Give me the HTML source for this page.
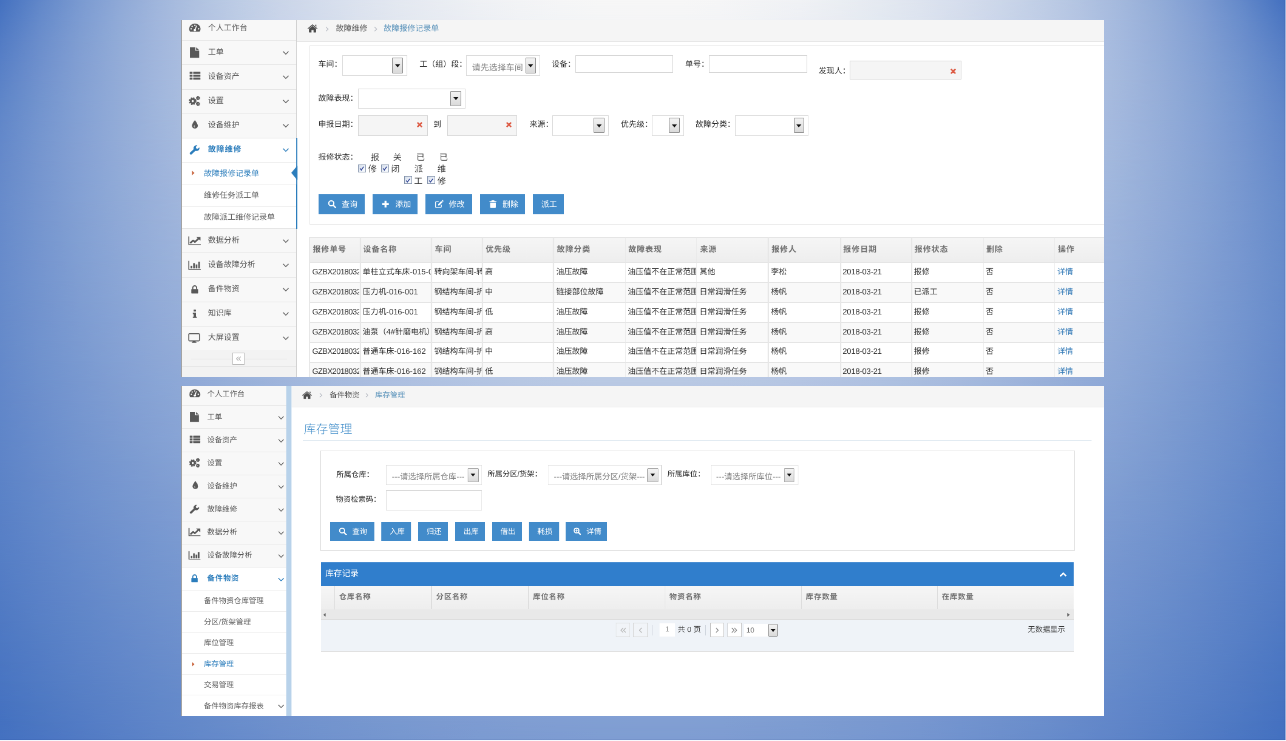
<!DOCTYPE html><html lang="zh-CN"><head><meta charset="utf-8"><title>故障报修记录单 / 库存管理</title><style>
html,body{margin:0;padding:0}
body{width:1286px;height:741px;overflow:hidden;position:relative;background:#4472c4;font-family:"Liberation Sans","Noto Sans CJK SC",sans-serif}
#bg{position:absolute;left:0;top:0;width:1286px;height:741px;overflow:hidden}
#bg i{position:absolute;left:0;width:1286px;display:block}
#bg .eb{top:740px;height:1px;background:rgba(255,255,255,.94)}
#bg .er{left:1285px;top:0;width:1px;height:741px;background:rgba(255,255,255,.45)}
#bg .db{top:739px;height:1px;background:rgba(20,40,120,.07)}
#bg .dr{left:1284px;top:0;width:1px;height:740px;background:rgba(20,40,120,.06)}
.edge{position:absolute;left:181px;width:1px;background:#a3a3a3}
.shot{position:absolute;overflow:hidden;background:#fff}
.pg{position:absolute;left:0;top:0;width:1700px;height:700px;transform-origin:0 0;font-size:13px;color:#393939;will-change:transform;text-rendering:geometricPrecision}
.pg>div,.pg>span,.pg>svg{position:absolute;box-sizing:border-box}
.ic{position:absolute;display:block;overflow:visible}
.t{position:absolute;white-space:nowrap;display:block}
.lab{color:#2c2c2c}
.ph{color:#858585}
.cb14{font-size:14px;color:#393939}
.h1{font-size:21px;color:#3f8cc9;font-weight:300}
.bc{background:#f5f5f5}
.panel{border:1px solid #e3e3e3;background:#fff}
.sel{border:1px solid #dadada;background:#fff}
.dd{border:1.25px solid #858585;background:linear-gradient(#f4f4f4,#dadada);border-radius:1px}
.inp{border:1px solid #d5d5d5;background:#fff}
.inp.ro{background:#f5f5f5}
.btn{background:#428bca;color:#fff;text-align:center;white-space:nowrap;display:flex;align-items:center;justify-content:center;padding-left:3px}
.btn span{line-height:20px;position:relative;top:.6px}
.btn .bi{display:block;color:#fff;flex:none}
.chk{border:1.3px solid #8493ab;background:linear-gradient(135deg,#d3dcea,#f6f9fd 75%)}
.thead{background:linear-gradient(#f6f6f6,#eee)}
.cell{overflow:hidden}
.cell .t{line-height:20px}
.th{color:#707070;font-weight:bold;letter-spacing:.9px}
.td{color:#2e2e2e}
.td.lk{color:#337ab7}
.n0{letter-spacing:-.55px}
.n8{letter-spacing:-.2px}
.sbg{background:#f2f2f2}
.it{background:#f8f8f8}
.it.act{background:#fff}
.lb{color:#585858}
.lb.act{color:#2b7dbc;font-weight:bold;letter-spacing:.9px}
.sit{background:#fff}
.slb{color:#616161}
.slb.sact{color:#2b7dbc}
.tb{border:1px solid #bbb;background:#fff}
.strip{background:#b8d2ea}
.gtitle{background:#307ecc}
.ghead{background:linear-gradient(#f6f6f6,#eee)}
.hsb{background:#e9e9e9}
.pager{background:#eff3f8}
.pgb{border:1px solid #c6c6c6;background:#fff}
.pgb.dis{background:#f1f4f8;border-color:#d4d4d4}
</style></head><body><div id="bg"><i style="top:0px;height:20px;background:linear-gradient(90deg,#4471c0 0px,#6187c9 40px,#7a9ad1 80px,#8fa9d7 120px,#a1b7dd 160px,#b1c3e1 200px,#becde6 240px,#cad5e9 280px,#d4ddec 320px,#dde3ef 360px,#e4e9f1 400px,#eaedf3 440px,#eff1f5 480px,#f3f4f6 520px,#f6f6f7 560px,#f7f7f7 600px,#f7f7f7 640px,#f7f7f7 680px,#f6f6f7 720px,#f3f4f6 760px,#f0f2f5 800px,#ebeef3 840px,#e5eaf1 880px,#dee4ef 920px,#d6deed 960px,#ccd7ea 1000px,#c0cee6 1040px,#b3c4e2 1080px,#a4b9dd 1120px,#92acd8 1160px,#7e9cd2 1200px,#658aca 1240px,#4773c1 1280px,#4471c0 1286px);"></i><i style="top:0px;height:40px;background:linear-gradient(90deg,#4b76c2 0px,#668bcb 40px,#7d9cd2 80px,#91abd8 120px,#a2b7dd 160px,#b1c2e1 200px,#bdcce5 240px,#c9d4e9 280px,#d2dbec 320px,#dbe2ee 360px,#e2e7f0 400px,#e7ebf2 440px,#eceff4 480px,#f0f2f5 520px,#f2f4f6 560px,#f4f5f6 600px,#f5f5f6 640px,#f4f5f6 680px,#f3f4f6 720px,#f0f2f5 760px,#edeff4 800px,#e8ecf2 840px,#e2e8f1 880px,#dce3ef 920px,#d4dcec 960px,#cad5e9 1000px,#bfcde6 1040px,#b3c4e2 1080px,#a4b9de 1120px,#94add8 1160px,#819ed3 1200px,#6a8ecc 1240px,#4f79c3 1280px,#4b76c2 1286px);-webkit-mask-image:linear-gradient(180deg,transparent 0,#000 50%);mask-image:linear-gradient(180deg,transparent 0,#000 50%);"></i><i style="top:20px;height:40px;background:linear-gradient(90deg,#527bc4 0px,#6b8ecc 40px,#809ed2 80px,#92acd8 120px,#a2b7dd 160px,#b0c2e1 200px,#bccbe5 240px,#c7d3e8 280px,#d0daeb 320px,#d8e0ee 360px,#dfe5f0 400px,#e5e9f1 440px,#e9edf3 480px,#edeff4 520px,#eff1f5 560px,#f1f2f5 600px,#f1f3f5 640px,#f1f2f5 680px,#eff1f5 720px,#edf0f4 760px,#eaedf3 800px,#e5eaf2 840px,#e0e6f0 880px,#d9e1ee 920px,#d1dbeb 960px,#c8d4e9 1000px,#becce5 1040px,#b2c3e2 1080px,#a4b9de 1120px,#95add9 1160px,#83a0d3 1200px,#6e90cd 1240px,#567ec5 1280px,#527bc4 1286px);-webkit-mask-image:linear-gradient(180deg,transparent 0,#000 50%);mask-image:linear-gradient(180deg,transparent 0,#000 50%);"></i><i style="top:40px;height:40px;background:linear-gradient(90deg,#577fc6 0px,#6e90cd 40px,#829fd3 80px,#93acd8 120px,#a2b7dd 160px,#afc1e1 200px,#bbcae5 240px,#c5d2e8 280px,#ced8ea 320px,#d6deed 360px,#dce3ef 400px,#e2e7f0 440px,#e6eaf2 480px,#eaedf3 520px,#eceff4 560px,#edf0f4 600px,#eef0f4 640px,#eef0f4 680px,#eceff4 720px,#eaedf3 760px,#e7ebf2 800px,#e2e8f1 840px,#dde4ef 880px,#d7dfed 920px,#cfd9eb 960px,#c7d3e8 1000px,#bdcbe5 1040px,#b1c3e2 1080px,#a4b9de 1120px,#95aed9 1160px,#84a1d4 1200px,#7193ce 1240px,#5b82c7 1280px,#577fc6 1286px);-webkit-mask-image:linear-gradient(180deg,transparent 0,#000 50%);mask-image:linear-gradient(180deg,transparent 0,#000 50%);"></i><i style="top:60px;height:40px;background:linear-gradient(90deg,#5b82c7 0px,#7192ce 40px,#83a0d3 80px,#93acd8 120px,#a2b7dd 160px,#aec1e1 200px,#bac9e4 240px,#c3d0e7 280px,#ccd7ea 320px,#d3dcec 360px,#dae1ee 400px,#dfe5f0 440px,#e3e8f1 480px,#e6ebf2 520px,#e9ecf3 560px,#eaedf3 600px,#ebeef3 640px,#eaedf3 680px,#e9edf3 720px,#e7ebf2 760px,#e4e9f1 800px,#e0e5f0 840px,#dae2ee 880px,#d4ddec 920px,#cdd8ea 960px,#c5d1e8 1000px,#bbcae5 1040px,#b0c2e1 1080px,#a4b9dd 1120px,#96aed9 1160px,#86a2d4 1200px,#7395cf 1240px,#5f85c8 1280px,#5b82c7 1286px);-webkit-mask-image:linear-gradient(180deg,transparent 0,#000 50%);mask-image:linear-gradient(180deg,transparent 0,#000 50%);"></i><i style="top:80px;height:40px;background:linear-gradient(90deg,#5e85c8 0px,#7294ce 40px,#84a1d4 80px,#93acd8 120px,#a1b7dd 160px,#adc0e0 200px,#b8c8e4 240px,#c1cfe7 280px,#cad5e9 320px,#d1daeb 360px,#d7dfed 400px,#dce3ef 440px,#e0e6f0 480px,#e3e8f1 520px,#e6eaf2 560px,#e7ebf2 600px,#e7ebf2 640px,#e7ebf2 680px,#e6eaf2 720px,#e4e8f1 760px,#e1e6f0 800px,#dde3ef 840px,#d8e0ed 880px,#d2dbec 920px,#cbd6e9 960px,#c3d0e7 1000px,#b9c9e4 1040px,#afc1e1 1080px,#a3b8dd 1120px,#96aed9 1160px,#86a3d4 1200px,#7596cf 1240px,#6287c9 1280px,#5e85c8 1286px);-webkit-mask-image:linear-gradient(180deg,transparent 0,#000 50%);mask-image:linear-gradient(180deg,transparent 0,#000 50%);"></i><i style="top:100px;height:40px;background:linear-gradient(90deg,#6187c9 0px,#7495cf 40px,#84a1d4 80px,#93acd8 120px,#a0b6dc 160px,#acbfe0 200px,#b6c6e3 240px,#bfcde6 280px,#c7d3e8 320px,#ced8ea 360px,#d4ddec 400px,#d9e1ee 440px,#dde4ef 480px,#e0e6f0 520px,#e2e7f1 560px,#e4e9f1 600px,#e4e9f1 640px,#e4e9f1 680px,#e3e8f1 720px,#e0e6f0 760px,#dde4ef 800px,#dae1ee 840px,#d5dded 880px,#cfd9eb 920px,#c8d4e9 960px,#c1cee6 1000px,#b8c8e4 1040px,#aec0e0 1080px,#a2b7dd 1120px,#95aed9 1160px,#87a3d5 1200px,#7697d0 1240px,#6489ca 1280px,#6187c9 1286px);-webkit-mask-image:linear-gradient(180deg,transparent 0,#000 50%);mask-image:linear-gradient(180deg,transparent 0,#000 50%);"></i><i style="top:120px;height:40px;background:linear-gradient(90deg,#6388ca 0px,#7596cf 40px,#85a1d4 80px,#93acd8 120px,#9fb5dc 160px,#aabedf 200px,#b4c5e3 240px,#bdcce5 280px,#c5d1e8 320px,#ccd6ea 360px,#d1dbeb 400px,#d6deed 440px,#dae1ee 480px,#dde3ef 520px,#dfe5f0 560px,#e0e6f0 600px,#e1e6f0 640px,#e0e6f0 680px,#dfe5f0 720px,#dde4ef 760px,#dae2ee 800px,#d7dfed 840px,#d2dbec 880px,#ccd7ea 920px,#c6d2e8 960px,#becde6 1000px,#b6c6e3 1040px,#acbfe0 1080px,#a1b7dd 1120px,#95add9 1160px,#87a3d5 1200px,#7797d0 1240px,#668aca 1280px,#6388ca 1286px);-webkit-mask-image:linear-gradient(180deg,transparent 0,#000 50%);mask-image:linear-gradient(180deg,transparent 0,#000 50%);"></i><i style="top:140px;height:40px;background:linear-gradient(90deg,#6589ca 0px,#7696cf 40px,#85a1d4 80px,#92abd8 120px,#9eb4dc 160px,#a9bddf 200px,#b2c4e2 240px,#bbcae5 280px,#c2d0e7 320px,#c9d4e9 360px,#ced9eb 400px,#d3dcec 440px,#d7dfed 480px,#dae1ee 520px,#dce3ef 560px,#dde4ef 600px,#dee4ef 640px,#dde4ef 680px,#dce3ef 720px,#dae1ee 760px,#d7dfed 800px,#d4ddec 840px,#cfd9eb 880px,#cad5e9 920px,#c3d0e7 960px,#bccbe5 1000px,#b4c5e2 1040px,#aabedf 1080px,#a0b6dc 1120px,#94add9 1160px,#87a3d4 1200px,#7898d0 1240px,#678bcb 1280px,#6589ca 1286px);-webkit-mask-image:linear-gradient(180deg,transparent 0,#000 50%);mask-image:linear-gradient(180deg,transparent 0,#000 50%);"></i><i style="top:160px;height:40px;background:linear-gradient(90deg,#668aca 0px,#7696cf 40px,#84a1d4 80px,#91abd8 120px,#9db3db 160px,#a7bbde 200px,#b0c2e1 240px,#b9c8e4 280px,#c0cee6 320px,#c6d2e8 360px,#ccd6ea 400px,#d0daeb 440px,#d4ddec 480px,#d7dfed 520px,#d9e0ee 560px,#dae1ee 600px,#dae2ee 640px,#dae1ee 680px,#d9e0ee 720px,#d7dfed 760px,#d4ddec 800px,#d1daeb 840px,#ccd7ea 880px,#c7d3e8 920px,#c1cee6 960px,#bac9e4 1000px,#b2c3e2 1040px,#a9bcdf 1080px,#9eb5dc 1120px,#93acd8 1160px,#86a3d4 1200px,#7898d0 1240px,#688ccb 1280px,#668aca 1286px);-webkit-mask-image:linear-gradient(180deg,transparent 0,#000 50%);mask-image:linear-gradient(180deg,transparent 0,#000 50%);"></i><i style="top:180px;height:40px;background:linear-gradient(90deg,#678bcb 0px,#7696cf 40px,#84a1d4 80px,#90aad7 120px,#9bb2db 160px,#a5bade 200px,#aec1e1 240px,#b6c7e3 280px,#bdcce5 320px,#c3d0e7 360px,#c9d4e9 400px,#cdd8ea 440px,#d1daeb 480px,#d3dcec 520px,#d5deed 560px,#d7dfed 600px,#d7dfed 640px,#d7dfed 680px,#d6deed 720px,#d4ddec 760px,#d1dbeb 800px,#ced8ea 840px,#c9d5e9 880px,#c4d1e7 920px,#becde6 960px,#b7c7e3 1000px,#b0c2e1 1040px,#a7bbde 1080px,#9db4db 1120px,#92abd8 1160px,#86a2d4 1200px,#7898d0 1240px,#698dcb 1280px,#678bcb 1286px);-webkit-mask-image:linear-gradient(180deg,transparent 0,#000 50%);mask-image:linear-gradient(180deg,transparent 0,#000 50%);"></i><i style="top:200px;height:40px;background:linear-gradient(90deg,#678bcb 0px,#7696cf 40px,#83a0d3 80px,#8fa9d7 120px,#9ab1da 160px,#a4b9dd 200px,#acbfe0 240px,#b4c5e2 280px,#bbcae4 320px,#c1cee6 360px,#c6d2e8 400px,#cad5e9 440px,#cdd8ea 480px,#d0daeb 520px,#d2dbec 560px,#d3dcec 600px,#d4ddec 640px,#d3dcec 680px,#d2dcec 720px,#d1daeb 760px,#ced8ea 800px,#cbd6e9 840px,#c6d3e8 880px,#c1cfe7 920px,#bccbe5 960px,#b5c6e3 1000px,#adc0e0 1040px,#a5bade 1080px,#9bb2db 1120px,#91aad8 1160px,#85a2d4 1200px,#7898d0 1240px,#698dcb 1280px,#678bcb 1286px);-webkit-mask-image:linear-gradient(180deg,transparent 0,#000 50%);mask-image:linear-gradient(180deg,transparent 0,#000 50%);"></i><i style="top:220px;height:40px;background:linear-gradient(90deg,#678bcb 0px,#7596cf 40px,#82a0d3 80px,#8ea8d7 120px,#98b0da 160px,#a2b7dd 200px,#aabddf 240px,#b2c3e2 280px,#b8c8e4 320px,#becce5 360px,#c3d0e7 400px,#c7d3e8 440px,#cad6e9 480px,#cdd8ea 520px,#cfd9eb 560px,#d0daeb 600px,#d0daeb 640px,#d0daeb 680px,#cfd9eb 720px,#cdd8ea 760px,#cbd6e9 800px,#c8d3e8 840px,#c4d0e7 880px,#bfcde6 920px,#b9c9e4 960px,#b3c4e2 1000px,#abbee0 1040px,#a3b8dd 1080px,#9ab1da 1120px,#8fa9d7 1160px,#84a1d4 1200px,#7797d0 1240px,#698dcb 1280px,#678bcb 1286px);-webkit-mask-image:linear-gradient(180deg,transparent 0,#000 50%);mask-image:linear-gradient(180deg,transparent 0,#000 50%);"></i><i style="top:240px;height:40px;background:linear-gradient(90deg,#678bcb 0px,#7595cf 40px,#819fd3 80px,#8ca7d6 120px,#96afd9 160px,#a0b6dc 200px,#a8bcdf 240px,#afc1e1 280px,#b5c6e3 320px,#bbcae5 360px,#c0cee6 400px,#c4d1e7 440px,#c7d3e8 480px,#cad5e9 520px,#ccd7ea 560px,#cdd7ea 600px,#cdd8ea 640px,#cdd7ea 680px,#ccd7ea 720px,#cad5e9 760px,#c8d4e8 800px,#c4d1e7 840px,#c1cee6 880px,#bccbe5 920px,#b6c7e3 960px,#b0c2e1 1000px,#a9bddf 1040px,#a1b7dd 1080px,#98b0da 1120px,#8ea8d7 1160px,#83a0d3 1200px,#7797d0 1240px,#698dcb 1280px,#678bcb 1286px);-webkit-mask-image:linear-gradient(180deg,transparent 0,#000 50%);mask-image:linear-gradient(180deg,transparent 0,#000 50%);"></i><i style="top:260px;height:40px;background:linear-gradient(90deg,#678bcb 0px,#7495cf 40px,#809ed2 80px,#8ba6d6 120px,#95add9 160px,#9db4db 200px,#a5bade 240px,#adbfe0 280px,#b3c4e2 320px,#b8c8e4 360px,#bdcce5 400px,#c1cee6 440px,#c4d1e7 480px,#c7d3e8 520px,#c8d4e9 560px,#c9d5e9 600px,#cad5e9 640px,#cad5e9 680px,#c9d4e9 720px,#c7d3e8 760px,#c5d1e7 800px,#c1cfe7 840px,#becce5 880px,#b9c9e4 920px,#b4c5e2 960px,#adc0e0 1000px,#a7bbde 1040px,#9fb5dc 1080px,#96aed9 1120px,#8ca7d6 1160px,#829fd3 1200px,#7696cf 1240px,#698dcb 1280px,#678bcb 1286px);-webkit-mask-image:linear-gradient(180deg,transparent 0,#000 50%);mask-image:linear-gradient(180deg,transparent 0,#000 50%);"></i><i style="top:280px;height:40px;background:linear-gradient(90deg,#668bcb 0px,#7394ce 40px,#7f9dd2 80px,#89a5d5 120px,#93acd8 160px,#9bb2db 200px,#a3b8dd 240px,#aabddf 280px,#b0c2e1 320px,#b5c6e3 360px,#bac9e4 400px,#becce5 440px,#c1cfe6 480px,#c3d0e7 520px,#c5d2e8 560px,#c6d2e8 600px,#c7d3e8 640px,#c6d3e8 680px,#c5d2e8 720px,#c4d1e7 760px,#c1cfe7 800px,#becde6 840px,#bbcae4 880px,#b6c6e3 920px,#b1c3e1 960px,#abbee0 1000px,#a4b9de 1040px,#9db3db 1080px,#94add9 1120px,#8ba6d6 1160px,#809ed3 1200px,#7596cf 1240px,#688ccb 1280px,#668bcb 1286px);-webkit-mask-image:linear-gradient(180deg,transparent 0,#000 50%);mask-image:linear-gradient(180deg,transparent 0,#000 50%);"></i><i style="top:300px;height:40px;background:linear-gradient(90deg,#668aca 0px,#7293ce 40px,#7d9cd2 80px,#87a3d5 120px,#91aad8 160px,#99b1da 200px,#a1b6dc 240px,#a7bbdf 280px,#adc0e0 320px,#b2c4e2 360px,#b7c7e3 400px,#bbcae4 440px,#becce5 480px,#c0cee6 520px,#c2cfe7 560px,#c3d0e7 600px,#c3d0e7 640px,#c3d0e7 680px,#c2cfe7 720px,#c0cee6 760px,#becce6 800px,#bbcae5 840px,#b8c8e4 880px,#b3c4e2 920px,#aec0e1 960px,#a8bcdf 1000px,#a2b7dd 1040px,#9ab2db 1080px,#92abd8 1120px,#89a5d5 1160px,#7f9dd2 1200px,#7495cf 1240px,#688ccb 1280px,#668aca 1286px);-webkit-mask-image:linear-gradient(180deg,transparent 0,#000 50%);mask-image:linear-gradient(180deg,transparent 0,#000 50%);"></i><i style="top:320px;height:40px;background:linear-gradient(90deg,#658aca 0px,#7193ce 40px,#7c9bd1 80px,#86a2d4 120px,#8fa9d7 160px,#97afd9 200px,#9eb4dc 240px,#a5b9de 280px,#abbee0 320px,#b0c2e1 360px,#b4c5e2 400px,#b8c8e4 440px,#bbcae4 480px,#bdcce5 520px,#bfcde6 560px,#c0cee6 600px,#c0cee6 640px,#c0cee6 680px,#bfcde6 720px,#bdcce5 760px,#bbcae5 800px,#b8c8e4 840px,#b5c5e3 880px,#b0c2e1 920px,#abbee0 960px,#a6bade 1000px,#9fb5dc 1040px,#98b0da 1080px,#90aad7 1120px,#87a3d5 1160px,#7d9cd2 1200px,#7394ce 1240px,#678bcb 1280px,#658aca 1286px);-webkit-mask-image:linear-gradient(180deg,transparent 0,#000 50%);mask-image:linear-gradient(180deg,transparent 0,#000 50%);"></i><i style="top:340px;height:40px;background:linear-gradient(90deg,#6489ca 0px,#7092cd 40px,#7a9ad1 80px,#84a1d4 120px,#8da7d6 160px,#95add9 200px,#9cb3db 240px,#a2b7dd 280px,#a8bcdf 320px,#adbfe0 360px,#b1c3e1 400px,#b5c5e3 440px,#b7c7e3 480px,#bac9e4 520px,#bbcae5 560px,#bccbe5 600px,#bdcbe5 640px,#bccbe5 680px,#bccbe5 720px,#bac9e4 760px,#b8c8e4 800px,#b5c6e3 840px,#b2c3e2 880px,#adc0e0 920px,#a9bcdf 960px,#a3b8dd 1000px,#9db3db 1040px,#96aed9 1080px,#8ea8d7 1120px,#85a2d4 1160px,#7c9bd1 1200px,#7193ce 1240px,#668aca 1280px,#6489ca 1286px);-webkit-mask-image:linear-gradient(180deg,transparent 0,#000 50%);mask-image:linear-gradient(180deg,transparent 0,#000 50%);"></i><i style="top:360px;height:40px;background:linear-gradient(90deg,#6388ca 0px,#6e91cd 40px,#7898d0 80px,#829fd3 120px,#8aa6d6 160px,#92abd8 200px,#99b1da 240px,#9fb5dc 280px,#a5bade 320px,#aabddf 360px,#aec0e1 400px,#b1c3e2 440px,#b4c5e3 480px,#b7c7e3 520px,#b8c8e4 560px,#b9c9e4 600px,#b9c9e4 640px,#b9c9e4 680px,#b8c8e4 720px,#b7c7e3 760px,#b5c5e3 800px,#b2c3e2 840px,#aec1e1 880px,#aabedf 920px,#a6bade 960px,#a0b6dc 1000px,#9ab1da 1040px,#93acd8 1080px,#8ca7d6 1120px,#83a0d3 1160px,#7a99d1 1200px,#7092cd 1240px,#6589ca 1280px,#6388ca 1286px);-webkit-mask-image:linear-gradient(180deg,transparent 0,#000 50%);mask-image:linear-gradient(180deg,transparent 0,#000 50%);"></i><i style="top:380px;height:40px;background:linear-gradient(90deg,#6287c9 0px,#6d8fcc 40px,#7797d0 80px,#809ed2 120px,#88a4d5 160px,#90aad7 200px,#97afd9 240px,#9db3db 280px,#a2b7dd 320px,#a7bbde 360px,#abbee0 400px,#aec1e1 440px,#b1c3e2 480px,#b3c4e2 520px,#b5c6e3 560px,#b6c6e3 600px,#b6c6e3 640px,#b6c6e3 680px,#b5c6e3 720px,#b4c5e2 760px,#b2c3e2 800px,#afc1e1 840px,#abbee0 880px,#a7bbdf 920px,#a3b8dd 960px,#9eb4dc 1000px,#98b0da 1040px,#91aad8 1080px,#89a5d5 1120px,#819fd3 1160px,#7898d0 1200px,#6e91cd 1240px,#6389ca 1280px,#6287c9 1286px);-webkit-mask-image:linear-gradient(180deg,transparent 0,#000 50%);mask-image:linear-gradient(180deg,transparent 0,#000 50%);"></i><i style="top:400px;height:40px;background:linear-gradient(90deg,#6086c9 0px,#6b8ecc 40px,#7596cf 80px,#7e9cd2 120px,#86a2d4 160px,#8da8d7 200px,#94add9 240px,#9ab1da 280px,#9fb5dc 320px,#a4b9dd 360px,#a8bcdf 400px,#abbee0 440px,#aec0e1 480px,#b0c2e1 520px,#b2c3e2 560px,#b3c4e2 600px,#b3c4e2 640px,#b3c4e2 680px,#b2c3e2 720px,#b0c2e1 760px,#aec1e1 800px,#acbfe0 840px,#a8bcdf 880px,#a4b9de 920px,#a0b6dc 960px,#9bb2db 1000px,#95aed9 1040px,#8ea9d7 1080px,#87a3d5 1120px,#7f9dd2 1160px,#7697cf 1200px,#6d8fcc 1240px,#6288c9 1280px,#6086c9 1286px);-webkit-mask-image:linear-gradient(180deg,transparent 0,#000 50%);mask-image:linear-gradient(180deg,transparent 0,#000 50%);"></i><i style="top:420px;height:40px;background:linear-gradient(90deg,#5f85c8 0px,#698dcc 40px,#7394ce 80px,#7c9bd1 120px,#84a1d4 160px,#8ba6d6 200px,#91abd8 240px,#97afda 280px,#9cb3db 320px,#a1b7dd 360px,#a5b9de 400px,#a8bcdf 440px,#abbee0 480px,#adc0e0 520px,#aec1e1 560px,#afc1e1 600px,#b0c2e1 640px,#afc1e1 680px,#afc1e1 720px,#adc0e0 760px,#abbee0 800px,#a9bcdf 840px,#a5bade 880px,#a2b7dd 920px,#9db4db 960px,#98b0da 1000px,#92acd8 1040px,#8ca7d6 1080px,#85a1d4 1120px,#7d9cd1 1160px,#7495cf 1200px,#6b8ecc 1240px,#6186c9 1280px,#5f85c8 1286px);-webkit-mask-image:linear-gradient(180deg,transparent 0,#000 50%);mask-image:linear-gradient(180deg,transparent 0,#000 50%);"></i><i style="top:440px;height:40px;background:linear-gradient(90deg,#5e84c8 0px,#688ccb 40px,#7193ce 80px,#7999d0 120px,#819fd3 160px,#88a4d5 200px,#8fa9d7 240px,#94add9 280px,#99b1da 320px,#9eb4dc 360px,#a2b7dd 400px,#a5bade 440px,#a8bcdf 480px,#aabddf 520px,#abbee0 560px,#acbfe0 600px,#acbfe0 640px,#acbfe0 680px,#abbee0 720px,#aabddf 760px,#a8bcdf 800px,#a5bade 840px,#a2b8dd 880px,#9fb5dc 920px,#9ab1da 960px,#95aed9 1000px,#90aad7 1040px,#89a5d5 1080px,#82a0d3 1120px,#7b9ad1 1160px,#7294ce 1200px,#698dcb 1240px,#5f85c8 1280px,#5e84c8 1286px);-webkit-mask-image:linear-gradient(180deg,transparent 0,#000 50%);mask-image:linear-gradient(180deg,transparent 0,#000 50%);"></i><i style="top:460px;height:40px;background:linear-gradient(90deg,#5c83c7 0px,#668aca 40px,#6f91cd 80px,#7797d0 120px,#7f9dd2 160px,#86a2d4 200px,#8ca7d6 240px,#92abd8 280px,#97afd9 320px,#9bb2db 360px,#9fb5dc 400px,#a2b7dd 440px,#a4b9de 480px,#a6bbde 520px,#a8bcdf 560px,#a9bcdf 600px,#a9bddf 640px,#a9bcdf 680px,#a8bcdf 720px,#a7bbde 760px,#a5b9de 800px,#a2b8dd 840px,#9fb5dc 880px,#9bb2db 920px,#97afda 960px,#92acd8 1000px,#8da8d6 1040px,#87a3d4 1080px,#809ed2 1120px,#7898d0 1160px,#7092ce 1200px,#678bcb 1240px,#5e84c8 1280px,#5c83c7 1286px);-webkit-mask-image:linear-gradient(180deg,transparent 0,#000 50%);mask-image:linear-gradient(180deg,transparent 0,#000 50%);"></i><i style="top:480px;height:40px;background:linear-gradient(90deg,#5a82c7 0px,#6489ca 40px,#6d90cd 80px,#7596cf 120px,#7c9bd1 160px,#83a0d3 200px,#89a5d5 240px,#8fa9d7 280px,#94add8 320px,#98b0da 360px,#9cb3db 400px,#9fb5dc 440px,#a1b7dd 480px,#a3b8dd 520px,#a5b9de 560px,#a5bade 600px,#a6bade 640px,#a6bade 680px,#a5b9de 720px,#a3b8dd 760px,#a2b7dd 800px,#9fb5dc 840px,#9cb3db 880px,#98b0da 920px,#94add9 960px,#90aad7 1000px,#8aa5d6 1040px,#84a1d4 1080px,#7d9cd2 1120px,#7697cf 1160px,#6e91cd 1200px,#658aca 1240px,#5c83c7 1280px,#5a82c7 1286px);-webkit-mask-image:linear-gradient(180deg,transparent 0,#000 50%);mask-image:linear-gradient(180deg,transparent 0,#000 50%);"></i><i style="top:500px;height:40px;background:linear-gradient(90deg,#5980c6 0px,#6288c9 40px,#6b8ecc 80px,#7394ce 120px,#7a99d1 160px,#819ed3 200px,#87a3d4 240px,#8ca7d6 280px,#91aad8 320px,#95aed9 360px,#98b0da 400px,#9cb3db 440px,#9eb4dc 480px,#a0b6dc 520px,#a1b7dd 560px,#a2b8dd 600px,#a3b8dd 640px,#a2b8dd 680px,#a2b7dd 720px,#a0b6dc 760px,#9eb5dc 800px,#9cb3db 840px,#99b1da 880px,#95aed9 920px,#91abd8 960px,#8da7d6 1000px,#87a3d5 1040px,#819fd3 1080px,#7b9ad1 1120px,#7495cf 1160px,#6c8fcc 1200px,#6389ca 1240px,#5a82c7 1280px,#5980c6 1286px);-webkit-mask-image:linear-gradient(180deg,transparent 0,#000 50%);mask-image:linear-gradient(180deg,transparent 0,#000 50%);"></i><i style="top:520px;height:40px;background:linear-gradient(90deg,#577fc6 0px,#6086c9 40px,#698ccb 80px,#7092ce 120px,#7798d0 160px,#7e9cd2 200px,#84a1d4 240px,#89a5d5 280px,#8ea8d7 320px,#92abd8 360px,#95aed9 400px,#98b0da 440px,#9bb2db 480px,#9db3db 520px,#9eb4dc 560px,#9fb5dc 600px,#9fb5dc 640px,#9fb5dc 680px,#9eb5dc 720px,#9db4db 760px,#9bb2db 800px,#99b0da 840px,#96aed9 880px,#92acd8 920px,#8ea9d7 960px,#8aa5d5 1000px,#85a1d4 1040px,#7f9dd2 1080px,#7898d0 1120px,#7193ce 1160px,#6a8dcc 1200px,#6187c9 1240px,#5880c6 1280px,#577fc6 1286px);-webkit-mask-image:linear-gradient(180deg,transparent 0,#000 50%);mask-image:linear-gradient(180deg,transparent 0,#000 50%);"></i><i style="top:540px;height:40px;background:linear-gradient(90deg,#557ec5 0px,#5e84c8 40px,#668bcb 80px,#6e90cd 120px,#7596cf 160px,#7b9ad1 200px,#819fd3 240px,#86a3d4 280px,#8ba6d6 320px,#8fa9d7 360px,#92acd8 400px,#95aed9 440px,#98b0da 480px,#99b1da 520px,#9bb2db 560px,#9cb3db 600px,#9cb3db 640px,#9cb3db 680px,#9bb2db 720px,#9ab1da 760px,#98b0da 800px,#96aed9 840px,#93acd8 880px,#8fa9d7 920px,#8ba6d6 960px,#87a3d5 1000px,#829fd3 1040px,#7c9bd1 1080px,#7696cf 1120px,#6f91cd 1160px,#688ccb 1200px,#5f85c8 1240px,#567fc6 1280px,#557ec5 1286px);-webkit-mask-image:linear-gradient(180deg,transparent 0,#000 50%);mask-image:linear-gradient(180deg,transparent 0,#000 50%);"></i><i style="top:560px;height:40px;background:linear-gradient(90deg,#537cc5 0px,#5c83c7 40px,#6489ca 80px,#6c8fcc 120px,#7294ce 160px,#7998d0 200px,#7e9dd2 240px,#83a0d3 280px,#88a4d5 320px,#8ca7d6 360px,#8fa9d7 400px,#92abd8 440px,#94add9 480px,#96afd9 520px,#98b0da 560px,#98b0da 600px,#99b0da 640px,#98b0da 680px,#98b0da 720px,#96afd9 760px,#95add9 800px,#92acd8 840px,#90aad7 880px,#8ca7d6 920px,#88a4d5 960px,#84a1d4 1000px,#7f9dd2 1040px,#7999d0 1080px,#7394cf 1120px,#6d8fcc 1160px,#658aca 1200px,#5d84c8 1240px,#557dc5 1280px,#537cc5 1286px);-webkit-mask-image:linear-gradient(180deg,transparent 0,#000 50%);mask-image:linear-gradient(180deg,transparent 0,#000 50%);"></i><i style="top:580px;height:40px;background:linear-gradient(90deg,#517bc4 0px,#5a81c7 40px,#6287c9 80px,#698dcb 120px,#7092cd 160px,#7696cf 200px,#7b9ad1 240px,#809ed3 280px,#85a2d4 320px,#89a4d5 360px,#8ca7d6 400px,#8fa9d7 440px,#91abd8 480px,#93acd8 520px,#94add9 560px,#95aed9 600px,#95aed9 640px,#95aed9 680px,#94add9 720px,#93acd8 760px,#92abd8 800px,#8fa9d7 840px,#8da7d6 880px,#89a5d5 920px,#85a2d4 960px,#819fd3 1000px,#7c9bd1 1040px,#7797d0 1080px,#7192ce 1120px,#6a8ecc 1160px,#6388c9 1200px,#5b82c7 1240px,#537cc4 1280px,#517bc4 1286px);-webkit-mask-image:linear-gradient(180deg,transparent 0,#000 50%);mask-image:linear-gradient(180deg,transparent 0,#000 50%);"></i><i style="top:600px;height:40px;background:linear-gradient(90deg,#4f79c3 0px,#5880c6 40px,#5f86c8 80px,#678bcb 120px,#6d90cd 160px,#7394ce 200px,#7998d0 240px,#7d9cd2 280px,#829fd3 320px,#86a2d4 360px,#89a5d5 400px,#8ca7d6 440px,#8ea8d7 480px,#90aad7 520px,#91abd8 560px,#92abd8 600px,#92abd8 640px,#92abd8 680px,#91abd8 720px,#90aad7 760px,#8ea9d7 800px,#8ca7d6 840px,#89a5d5 880px,#86a3d4 920px,#82a0d3 960px,#7e9dd2 1000px,#7999d0 1040px,#7495cf 1080px,#6e91cd 1120px,#688ccb 1160px,#6186c9 1200px,#5981c6 1240px,#517ac4 1280px,#4f79c3 1286px);-webkit-mask-image:linear-gradient(180deg,transparent 0,#000 50%);mask-image:linear-gradient(180deg,transparent 0,#000 50%);"></i><i style="top:620px;height:40px;background:linear-gradient(90deg,#4d78c3 0px,#557ec5 40px,#5d84c8 80px,#6489ca 120px,#6b8ecc 160px,#7092ce 200px,#7696cf 240px,#7b9ad1 280px,#7f9dd2 320px,#83a0d3 360px,#86a2d4 400px,#89a4d5 440px,#8ba6d6 480px,#8da7d6 520px,#8ea8d7 560px,#8fa9d7 600px,#8fa9d7 640px,#8fa9d7 680px,#8ea8d7 720px,#8da7d6 760px,#8ba6d6 800px,#89a5d5 840px,#86a3d4 880px,#83a0d3 920px,#7f9dd2 960px,#7b9ad1 1000px,#7697d0 1040px,#7193ce 1080px,#6b8fcc 1120px,#658aca 1160px,#5e85c8 1200px,#577fc6 1240px,#4e79c3 1280px,#4d78c3 1286px);-webkit-mask-image:linear-gradient(180deg,transparent 0,#000 50%);mask-image:linear-gradient(180deg,transparent 0,#000 50%);"></i><i style="top:640px;height:40px;background:linear-gradient(90deg,#4b76c2 0px,#537cc5 40px,#5b82c7 80px,#6287c9 120px,#688ccb 160px,#6e90cd 200px,#7394ce 240px,#7898d0 280px,#7c9bd1 320px,#7f9ed2 360px,#83a0d3 400px,#85a2d4 440px,#88a4d5 480px,#89a5d5 520px,#8ba6d6 560px,#8ba6d6 600px,#8ca7d6 640px,#8ba6d6 680px,#8ba6d6 720px,#89a5d5 760px,#88a4d5 800px,#86a2d4 840px,#83a0d3 880px,#809ed2 920px,#7c9bd1 960px,#7898d0 1000px,#7495cf 1040px,#6e91cd 1080px,#698dcb 1120px,#6388c9 1160px,#5c83c7 1200px,#547dc5 1240px,#4c77c3 1280px,#4b76c2 1286px);-webkit-mask-image:linear-gradient(180deg,transparent 0,#000 50%);mask-image:linear-gradient(180deg,transparent 0,#000 50%);"></i><i style="top:660px;height:40px;background:linear-gradient(90deg,#4975c2 0px,#517bc4 40px,#5880c6 80px,#5f85c8 120px,#658aca 160px,#6b8ecc 200px,#7092ce 240px,#7595cf 280px,#7999d0 320px,#7c9bd1 360px,#809ed2 400px,#82a0d3 440px,#84a1d4 480px,#86a2d4 520px,#87a3d5 560px,#88a4d5 600px,#88a4d5 640px,#88a4d5 680px,#87a3d5 720px,#86a3d4 760px,#85a1d4 800px,#83a0d3 840px,#809ed2 880px,#7d9cd1 920px,#7999d0 960px,#7596cf 1000px,#7192ce 1040px,#6c8fcc 1080px,#668bca 1120px,#6086c9 1160px,#5981c7 1200px,#527bc4 1240px,#4a76c2 1280px,#4975c2 1286px);-webkit-mask-image:linear-gradient(180deg,transparent 0,#000 50%);mask-image:linear-gradient(180deg,transparent 0,#000 50%);"></i><i style="top:680px;height:40px;background:linear-gradient(90deg,#4773c1 0px,#4e79c3 40px,#567ec5 80px,#5c83c7 120px,#6288c9 160px,#688ccb 200px,#6d90cd 240px,#7293ce 280px,#7696cf 320px,#7999d0 360px,#7c9bd1 400px,#7f9dd2 440px,#819fd3 480px,#83a0d3 520px,#84a1d4 560px,#85a1d4 600px,#85a2d4 640px,#85a1d4 680px,#84a1d4 720px,#83a0d3 760px,#819fd3 800px,#7f9dd2 840px,#7d9cd1 880px,#7a99d1 920px,#7697cf 960px,#7294ce 1000px,#6e90cd 1040px,#698dcb 1080px,#6388ca 1120px,#5d84c8 1160px,#577fc6 1200px,#507ac4 1240px,#4874c1 1280px,#4773c1 1286px);-webkit-mask-image:linear-gradient(180deg,transparent 0,#000 50%);mask-image:linear-gradient(180deg,transparent 0,#000 50%);"></i><i style="top:700px;height:40px;background:linear-gradient(90deg,#4471c0 0px,#4c77c2 40px,#537cc5 80px,#5a81c7 120px,#6086c9 160px,#658aca 200px,#6a8ecc 240px,#6f91cd 280px,#7394ce 320px,#7697cf 360px,#7999d0 400px,#7c9bd1 440px,#7e9cd2 480px,#809ed2 520px,#819ed3 560px,#819fd3 600px,#829fd3 640px,#829fd3 680px,#819fd3 720px,#809ed2 760px,#7e9dd2 800px,#7c9bd1 840px,#7a99d0 880px,#7797d0 920px,#7394cf 960px,#6f91cd 1000px,#6b8ecc 1040px,#668aca 1080px,#6186c9 1120px,#5b82c7 1160px,#547dc5 1200px,#4d78c3 1240px,#4672c1 1280px,#4471c0 1286px);-webkit-mask-image:linear-gradient(180deg,transparent 0,#000 50%);mask-image:linear-gradient(180deg,transparent 0,#000 50%);"></i><i style="top:720px;height:21px;background:linear-gradient(90deg,#4471c0 0px,#4a75c2 40px,#517ac4 80px,#577fc6 120px,#5d84c8 160px,#6288c9 200px,#678bcb 240px,#6c8fcc 280px,#7092cd 320px,#7394ce 360px,#7697cf 400px,#7998d0 440px,#7b9ad1 480px,#7c9bd1 520px,#7d9cd2 560px,#7e9dd2 600px,#7e9dd2 640px,#7e9dd2 680px,#7e9cd2 720px,#7c9bd1 760px,#7b9ad1 800px,#7999d0 840px,#7797d0 880px,#7495cf 920px,#7092ce 960px,#6c8fcc 1000px,#688ccb 1040px,#6388ca 1080px,#5e84c8 1120px,#5880c6 1160px,#527bc4 1200px,#4b76c2 1240px,#4471c0 1280px,#4471c0 1286px);-webkit-mask-image:linear-gradient(180deg,transparent 0,#000 95.24%);mask-image:linear-gradient(180deg,transparent 0,#000 95.24%);"></i><i style="top:740px;height:1px;background:linear-gradient(90deg,#4471c0 0px,#4a75c2 40px,#517ac4 80px,#577fc6 120px,#5d84c8 160px,#6288c9 200px,#678bcb 240px,#6c8fcc 280px,#7092cd 320px,#7394ce 360px,#7696cf 400px,#7898d0 440px,#7b9ad1 480px,#7c9bd1 520px,#7d9cd2 560px,#7e9cd2 600px,#7e9dd2 640px,#7e9cd2 680px,#7d9cd2 720px,#7c9bd1 760px,#7b9ad1 800px,#7999d0 840px,#7697cf 880px,#7395cf 920px,#7092ce 960px,#6c8fcc 1000px,#688ccb 1040px,#6388ca 1080px,#5e84c8 1120px,#5880c6 1160px,#527bc4 1200px,#4b76c2 1240px,#4471c0 1280px,#4471c0 1286px);-webkit-mask-image:linear-gradient(180deg,transparent 0,#000 100%);mask-image:linear-gradient(180deg,transparent 0,#000 100%);"></i><i class="db"></i><i class="dr"></i><i class="er"></i><i class="eb"></i></div><div class="edge" style="top:20px;height:357px"></div><div class="edge" style="top:386px;height:330px"></div><div class="shot" style="left:182px;top:20px;width:922px;height:357px;"><div class="pg" style="transform:scale(0.607)"><div class="bc" style="left:189.46px;top:-1.65px;width:1331.14px;height:36.90px;"></div><div style="left:189.46px;top:35.25px;width:1331.14px;height:1.00px;background:#e5e5e5;"></div><svg class="ic" style="left:205.99px;top:5.67px;width:18px;height:16px;color:#4c4c4c;" viewBox="0 0 18 16"><path fill="currentColor" d="M9 3.700l5.900 4.900v5.300c0 .3-.2.500-.5.500h-3.700v-4H7.300v4H3.600c-.3 0-.5-.2-.5-.5V8.600z"/><path fill="currentColor" d="M9 1l8.300 6.900-.9 1.100L9 2.900 1.600 9 .7 7.900z M13.300 1.800h2v3.200l-2-1.700z"/></svg><svg class="ic" style="left:234.37px;top:9.50px;width:10px;height:10px;color:#b2b6bf;" viewBox="0 0 12 12"><path fill="none" stroke="currentColor" stroke-width="1.300" d="M4 2l4 4-4 4"/></svg><span class="t" style="left:253.44px;top:3.84px;line-height:20px;color:#555;">故障维修</span><svg class="ic" style="left:313.62px;top:9.50px;width:10px;height:10px;color:#b2b6bf;" viewBox="0 0 12 12"><path fill="none" stroke="currentColor" stroke-width="1.300" d="M4 2l4 4-4 4"/></svg><span class="t" style="left:332.35px;top:3.84px;line-height:20px;color:#5791ba;">故障报修记录单</span><div class="panel" style="left:209.55px;top:41.84px;width:1319.78px;height:295.23px;"></div><span class="t lab" style="left:224.61px;top:63.15px;line-height:20px;">车间：</span><div class="sel" style="left:263.92px;top:57.82px;width:106.60px;height:34.28px;"></div><div class="dd" style="left:345.83px;top:62.47px;width:17.89px;height:25.14px;"></div><svg class="ic" style="left:350.58px;top:72.74px;width:8.400px;height:5px" viewBox="0 0 8.400 5"><path fill="#111" d="M0 0h8.400L4.200 5z"/></svg><span class="t lab" style="left:391.33px;top:63.15px;line-height:20px;">工（组）段：</span><div class="sel" style="left:468.36px;top:57.82px;width:121.92px;height:34.28px;"></div><span class="t ph" style="left:477.82px;top:68.09px;line-height:20px;font-size:14px;">请先选择车间</span><div class="dd" style="left:565.60px;top:62.47px;width:17.89px;height:25.14px;"></div><svg class="ic" style="left:570.35px;top:72.74px;width:8.400px;height:5px" viewBox="0 0 8.400 5"><path fill="#111" d="M0 0h8.400L4.200 5z"/></svg><span class="t lab" style="left:608.96px;top:63.15px;line-height:20px;">设备：</span><div class="inp" style="left:647.77px;top:57.82px;width:161.63px;height:29.17px;"></div><span class="t lab" style="left:829.05px;top:63.15px;line-height:20px;">单号：</span><div class="inp" style="left:867.87px;top:57.82px;width:162.12px;height:29.17px;"></div><span class="t lab" style="left:1048.82px;top:73.53px;line-height:20px;">发现人：</span><div class="inp ro" style="left:1100.32px;top:67.37px;width:183.21px;height:30.16px;"></div><svg class="ic" style="left:1264.68px;top:78.52px;width:11px;height:11px;color:#dd5a43;" viewBox="0 0 12 12"><path fill="none" stroke="currentColor" stroke-width="2.800" d="M2 2l8 8M10 2l-8 8"/></svg><span class="t lab" style="left:224.61px;top:119.24px;line-height:20px;">故障表现：</span><div class="sel" style="left:289.78px;top:112.51px;width:176.78px;height:33.95px;"></div><div class="dd" style="left:441.88px;top:117.17px;width:17.89px;height:24.81px;"></div><svg class="ic" style="left:446.62px;top:127.27px;width:8.400px;height:5px" viewBox="0 0 8.400 5"><path fill="#111" d="M0 0h8.400L4.200 5z"/></svg><span class="t lab" style="left:224.61px;top:161.83px;line-height:20px;">申报日期：</span><div class="inp ro" style="left:289.78px;top:156.67px;width:115.33px;height:34.28px;"></div><svg class="ic" style="left:386.43px;top:167.32px;width:11px;height:11px;color:#dd5a43;" viewBox="0 0 12 12"><path fill="none" stroke="currentColor" stroke-width="2.800" d="M2 2l8 8M10 2l-8 8"/></svg><span class="t lab" style="left:413.90px;top:161.83px;line-height:20px;">到</span><div class="inp ro" style="left:436.73px;top:156.67px;width:115.33px;height:34.28px;"></div><svg class="ic" style="left:533.21px;top:167.32px;width:11px;height:11px;color:#dd5a43;" viewBox="0 0 12 12"><path fill="none" stroke="currentColor" stroke-width="2.800" d="M2 2l8 8M10 2l-8 8"/></svg><span class="t lab" style="left:572.38px;top:161.83px;line-height:20px;">来源：</span><div class="sel" style="left:609.88px;top:156.67px;width:93.26px;height:34.28px;"></div><div class="dd" style="left:678.45px;top:161.32px;width:17.89px;height:25.14px;"></div><svg class="ic" style="left:683.20px;top:171.59px;width:8.400px;height:5px" viewBox="0 0 8.400 5"><path fill="#111" d="M0 0h8.400L4.200 5z"/></svg><span class="t lab" style="left:722.96px;top:161.83px;line-height:20px;">优先级：</span><div class="sel" style="left:774.46px;top:156.67px;width:52.40px;height:34.28px;"></div><div class="dd" style="left:802.18px;top:161.32px;width:17.89px;height:25.14px;"></div><svg class="ic" style="left:806.92px;top:171.59px;width:8.400px;height:5px" viewBox="0 0 8.400 5"><path fill="#111" d="M0 0h8.400L4.200 5z"/></svg><span class="t lab" style="left:846.02px;top:161.83px;line-height:20px;">故障分类：</span><div class="sel" style="left:911.03px;top:156.67px;width:121.26px;height:34.28px;"></div><div class="dd" style="left:1007.61px;top:161.32px;width:17.89px;height:25.14px;"></div><svg class="ic" style="left:1012.36px;top:171.59px;width:8.400px;height:5px" viewBox="0 0 8.400 5"><path fill="#111" d="M0 0h8.400L4.200 5z"/></svg><span class="t lab" style="left:224.61px;top:216.19px;line-height:20px;">报修状态：</span><span class="t cb14" style="left:309.96px;width:16px;text-align:center;top:215.54px;line-height:20px;">报</span><span class="t cb14" style="left:346.86px;width:16px;text-align:center;top:215.54px;line-height:20px;">关</span><span class="t cb14" style="left:385.08px;width:16px;text-align:center;top:215.54px;line-height:20px;">已</span><span class="t cb14" style="left:422.97px;width:16px;text-align:center;top:215.54px;line-height:20px;">已</span><span class="t cb14" style="left:305.67px;width:16px;text-align:center;top:235.30px;line-height:20px;">修</span><span class="t cb14" style="left:343.57px;width:16px;text-align:center;top:235.30px;line-height:20px;">闭</span><span class="t cb14" style="left:381.79px;width:16px;text-align:center;top:235.30px;line-height:20px;">派</span><span class="t cb14" style="left:419.68px;width:16px;text-align:center;top:235.30px;line-height:20px;">维</span><span class="t cb14" style="left:381.13px;width:16px;text-align:center;top:255.07px;line-height:20px;">工</span><span class="t cb14" style="left:419.68px;width:16px;text-align:center;top:255.07px;line-height:20px;">修</span><div class="chk" style="left:289.88px;top:237.65px;width:13.00px;height:13.00px;"></div><svg class="ic" style="left:291.13px;top:238.90px;width:10.5px;height:10.5px;color:#2b3f92;" viewBox="0 0 12 12"><path fill="none" stroke="currentColor" stroke-width="1.800" d="M2.500 6.300l2.500 2.700 4.500-6"/></svg><div class="chk" style="left:327.77px;top:237.65px;width:13.00px;height:13.00px;"></div><svg class="ic" style="left:329.02px;top:238.90px;width:10.5px;height:10.5px;color:#2b3f92;" viewBox="0 0 12 12"><path fill="none" stroke="currentColor" stroke-width="1.800" d="M2.500 6.300l2.500 2.700 4.500-6"/></svg><div class="chk" style="left:365.66px;top:257.26px;width:13.00px;height:13.00px;"></div><svg class="ic" style="left:366.91px;top:258.51px;width:10.5px;height:10.5px;color:#2b3f92;" viewBox="0 0 12 12"><path fill="none" stroke="currentColor" stroke-width="1.800" d="M2.500 6.300l2.500 2.700 4.500-6"/></svg><div class="chk" style="left:403.88px;top:257.26px;width:13.00px;height:13.00px;"></div><svg class="ic" style="left:405.13px;top:258.51px;width:10.5px;height:10.5px;color:#2b3f92;" viewBox="0 0 12 12"><path fill="none" stroke="currentColor" stroke-width="1.800" d="M2.500 6.300l2.500 2.700 4.500-6"/></svg><div class="btn" style="left:224.88px;top:286.99px;width:76.44px;height:33.28px;"><svg class="bi" style="width:14.5px;height:14.5px;margin-right:8.5px" viewBox="0 0 16 16"><circle cx="6.500" cy="6.500" r="4.600" fill="none" stroke="currentColor" stroke-width="2.200"/><path stroke="currentColor" stroke-width="2.600" stroke-linecap="round" d="M10.300 10.300l4 4"/></svg><span>查询</span></div><div class="btn" style="left:314.00px;top:286.99px;width:74.46px;height:33.28px;"><svg class="bi" style="width:14.5px;height:14.5px;margin-right:8.5px" viewBox="0 0 16 16"><path fill="currentColor" d="M6.200 2h3.600v4.200H14v3.600H9.800V14H6.200V9.800H2V6.200h4.200z"/></svg><span>添加</span></div><div class="btn" style="left:400.82px;top:286.99px;width:77.27px;height:33.28px;"><svg class="bi" style="width:14.5px;height:14.5px;margin-right:8.5px" viewBox="0 0 16 16"><path fill="none" stroke="currentColor" stroke-width="1.500" d="M12.300 9.500v3.300c0 .8-.6 1.400-1.400 1.400H3.200c-.8 0-1.400-.6-1.400-1.400V5.100c0-.8.600-1.400 1.400-1.400h4.300"/><path fill="currentColor" d="M6.500 10.500V8.300l5.800-5.800 2.200 2.200-5.800 5.800z M13 1.800l.9-.9c.3-.3.800-.3 1.100 0l1.100 1.100c.3.300.3.800 0 1.100l-.9.900z"/></svg><span>修改</span></div><div class="btn" style="left:490.94px;top:286.99px;width:73.97px;height:33.28px;"><svg class="bi" style="width:14.5px;height:14.5px;margin-right:8.5px" viewBox="0 0 14 16"><path fill="currentColor" d="M4.700 1h4.600l.8 1.800h3.200v1.700H.7V2.800h3.200z M1.800 5.300h10.400v8.600c0 .8-.6 1.300-1.300 1.300H3.100c-.7 0-1.300-.5-1.300-1.300z"/></svg><span>删除</span></div><div class="btn" style="left:577.59px;top:286.99px;width:51.40px;height:33.28px;"><span>派工</span></div><div class="thead" style="left:210.05px;top:357.50px;width:1318.78px;height:41.68px;"></div><div style="left:210.05px;top:432.29px;width:1318.78px;height:33.11px;background:#f9f9f9;"></div><div style="left:210.05px;top:497.86px;width:1318.78px;height:32.62px;background:#f9f9f9;"></div><div style="left:210.05px;top:563.10px;width:1318.78px;height:32.62px;background:#f9f9f9;"></div><div class="cell" style="left:210.05px;top:357.50px;width:83.20px;height:41.68px;"><span class="t th" style="left:5.33px;top:10.67px">报修单号</span></div><div class="cell" style="left:293.25px;top:357.50px;width:117.96px;height:41.68px;"><span class="t th" style="left:5.33px;top:10.67px">设备名称</span></div><div class="cell" style="left:411.20px;top:357.50px;width:83.69px;height:41.68px;"><span class="t th" style="left:5.33px;top:10.67px">车间</span></div><div class="cell" style="left:494.89px;top:357.50px;width:117.30px;height:41.68px;"><span class="t th" style="left:5.33px;top:10.67px">优先级</span></div><div class="cell" style="left:612.19px;top:357.50px;width:117.79px;height:41.68px;"><span class="t th" style="left:5.33px;top:10.67px">故障分类</span></div><div class="cell" style="left:729.98px;top:357.50px;width:118.12px;height:41.68px;"><span class="t th" style="left:5.33px;top:10.67px">故障表现</span></div><div class="cell" style="left:848.11px;top:357.50px;width:117.79px;height:41.68px;"><span class="t th" style="left:5.33px;top:10.67px">来源</span></div><div class="cell" style="left:965.90px;top:357.50px;width:118.12px;height:41.68px;"><span class="t th" style="left:5.33px;top:10.67px">报修人</span></div><div class="cell" style="left:1084.02px;top:357.50px;width:117.46px;height:41.68px;"><span class="t th" style="left:5.33px;top:10.67px">报修日期</span></div><div class="cell" style="left:1201.48px;top:357.50px;width:118.12px;height:41.68px;"><span class="t th" style="left:5.33px;top:10.67px">报修状态</span></div><div class="cell" style="left:1319.60px;top:357.50px;width:117.96px;height:41.68px;"><span class="t th" style="left:5.33px;top:10.67px">删除</span></div><div class="cell" style="left:1437.56px;top:357.50px;width:117.63px;height:41.68px;"><span class="t th" style="left:5.33px;top:10.67px">操作</span></div><div class="cell" style="left:210.05px;top:399.18px;width:82.37px;height:33.11px;"><span class="t td n0" style="left:4.34px;top:5.82px">GZBX2018032</span></div><div class="cell" style="left:293.25px;top:399.18px;width:117.13px;height:33.11px;"><span class="t td" style="left:4.34px;top:5.82px">单柱立式车床-015-0</span></div><div class="cell" style="left:411.20px;top:399.18px;width:82.87px;height:33.11px;"><span class="t td" style="left:4.34px;top:5.82px">转向架车间-转</span></div><div class="cell" style="left:494.89px;top:399.18px;width:116.47px;height:33.11px;"><span class="t td" style="left:4.34px;top:5.82px">高</span></div><div class="cell" style="left:612.19px;top:399.18px;width:116.97px;height:33.11px;"><span class="t td" style="left:4.34px;top:5.82px">油压故障</span></div><div class="cell" style="left:729.98px;top:399.18px;width:117.30px;height:33.11px;"><span class="t td" style="left:4.34px;top:5.82px">油压值不在正常范围</span></div><div class="cell" style="left:848.11px;top:399.18px;width:116.97px;height:33.11px;"><span class="t td" style="left:4.34px;top:5.82px">其他</span></div><div class="cell" style="left:965.90px;top:399.18px;width:117.30px;height:33.11px;"><span class="t td" style="left:4.34px;top:5.82px">李松</span></div><div class="cell" style="left:1084.02px;top:399.18px;width:116.64px;height:33.11px;"><span class="t td n8" style="left:4.34px;top:5.82px">2018-03-21</span></div><div class="cell" style="left:1201.48px;top:399.18px;width:117.30px;height:33.11px;"><span class="t td" style="left:4.34px;top:5.82px">报修</span></div><div class="cell" style="left:1319.60px;top:399.18px;width:117.13px;height:33.11px;"><span class="t td" style="left:4.34px;top:5.82px">否</span></div><div class="cell" style="left:1437.56px;top:399.18px;width:116.80px;height:33.11px;"><span class="t td lk" style="left:4.34px;top:5.82px">详情</span></div><div class="cell" style="left:210.05px;top:432.29px;width:82.37px;height:33.11px;"><span class="t td n0" style="left:4.34px;top:5.82px">GZBX2018032</span></div><div class="cell" style="left:293.25px;top:432.29px;width:117.13px;height:33.11px;"><span class="t td" style="left:4.34px;top:5.82px">压力机-016-001</span></div><div class="cell" style="left:411.20px;top:432.29px;width:82.87px;height:33.11px;"><span class="t td" style="left:4.34px;top:5.82px">钢结构车间-折</span></div><div class="cell" style="left:494.89px;top:432.29px;width:116.47px;height:33.11px;"><span class="t td" style="left:4.34px;top:5.82px">中</span></div><div class="cell" style="left:612.19px;top:432.29px;width:116.97px;height:33.11px;"><span class="t td" style="left:4.34px;top:5.82px">链接部位故障</span></div><div class="cell" style="left:729.98px;top:432.29px;width:117.30px;height:33.11px;"><span class="t td" style="left:4.34px;top:5.82px">油压值不在正常范围</span></div><div class="cell" style="left:848.11px;top:432.29px;width:116.97px;height:33.11px;"><span class="t td" style="left:4.34px;top:5.82px">日常润滑任务</span></div><div class="cell" style="left:965.90px;top:432.29px;width:117.30px;height:33.11px;"><span class="t td" style="left:4.34px;top:5.82px">杨帆</span></div><div class="cell" style="left:1084.02px;top:432.29px;width:116.64px;height:33.11px;"><span class="t td n8" style="left:4.34px;top:5.82px">2018-03-21</span></div><div class="cell" style="left:1201.48px;top:432.29px;width:117.30px;height:33.11px;"><span class="t td" style="left:4.34px;top:5.82px">已派工</span></div><div class="cell" style="left:1319.60px;top:432.29px;width:117.13px;height:33.11px;"><span class="t td" style="left:4.34px;top:5.82px">否</span></div><div class="cell" style="left:1437.56px;top:432.29px;width:116.80px;height:33.11px;"><span class="t td lk" style="left:4.34px;top:5.82px">详情</span></div><div class="cell" style="left:210.05px;top:465.40px;width:82.37px;height:32.45px;"><span class="t td n0" style="left:4.34px;top:5.82px">GZBX2018032</span></div><div class="cell" style="left:293.25px;top:465.40px;width:117.13px;height:32.45px;"><span class="t td" style="left:4.34px;top:5.82px">压力机-016-001</span></div><div class="cell" style="left:411.20px;top:465.40px;width:82.87px;height:32.45px;"><span class="t td" style="left:4.34px;top:5.82px">钢结构车间-折</span></div><div class="cell" style="left:494.89px;top:465.40px;width:116.47px;height:32.45px;"><span class="t td" style="left:4.34px;top:5.82px">低</span></div><div class="cell" style="left:612.19px;top:465.40px;width:116.97px;height:32.45px;"><span class="t td" style="left:4.34px;top:5.82px">油压故障</span></div><div class="cell" style="left:729.98px;top:465.40px;width:117.30px;height:32.45px;"><span class="t td" style="left:4.34px;top:5.82px">油压值不在正常范围</span></div><div class="cell" style="left:848.11px;top:465.40px;width:116.97px;height:32.45px;"><span class="t td" style="left:4.34px;top:5.82px">日常润滑任务</span></div><div class="cell" style="left:965.90px;top:465.40px;width:117.30px;height:32.45px;"><span class="t td" style="left:4.34px;top:5.82px">杨帆</span></div><div class="cell" style="left:1084.02px;top:465.40px;width:116.64px;height:32.45px;"><span class="t td n8" style="left:4.34px;top:5.82px">2018-03-21</span></div><div class="cell" style="left:1201.48px;top:465.40px;width:117.30px;height:32.45px;"><span class="t td" style="left:4.34px;top:5.82px">报修</span></div><div class="cell" style="left:1319.60px;top:465.40px;width:117.13px;height:32.45px;"><span class="t td" style="left:4.34px;top:5.82px">否</span></div><div class="cell" style="left:1437.56px;top:465.40px;width:116.80px;height:32.45px;"><span class="t td lk" style="left:4.34px;top:5.82px">详情</span></div><div class="cell" style="left:210.05px;top:497.86px;width:82.37px;height:32.62px;"><span class="t td n0" style="left:4.34px;top:5.82px">GZBX2018032</span></div><div class="cell" style="left:293.25px;top:497.86px;width:117.13px;height:32.62px;"><span class="t td" style="left:4.34px;top:5.82px">油泵（4#针磨电机）</span></div><div class="cell" style="left:411.20px;top:497.86px;width:82.87px;height:32.62px;"><span class="t td" style="left:4.34px;top:5.82px">钢结构车间-折</span></div><div class="cell" style="left:494.89px;top:497.86px;width:116.47px;height:32.62px;"><span class="t td" style="left:4.34px;top:5.82px">高</span></div><div class="cell" style="left:612.19px;top:497.86px;width:116.97px;height:32.62px;"><span class="t td" style="left:4.34px;top:5.82px">油压故障</span></div><div class="cell" style="left:729.98px;top:497.86px;width:117.30px;height:32.62px;"><span class="t td" style="left:4.34px;top:5.82px">油压值不在正常范围</span></div><div class="cell" style="left:848.11px;top:497.86px;width:116.97px;height:32.62px;"><span class="t td" style="left:4.34px;top:5.82px">日常润滑任务</span></div><div class="cell" style="left:965.90px;top:497.86px;width:117.30px;height:32.62px;"><span class="t td" style="left:4.34px;top:5.82px">杨帆</span></div><div class="cell" style="left:1084.02px;top:497.86px;width:116.64px;height:32.62px;"><span class="t td n8" style="left:4.34px;top:5.82px">2018-03-21</span></div><div class="cell" style="left:1201.48px;top:497.86px;width:117.30px;height:32.62px;"><span class="t td" style="left:4.34px;top:5.82px">报修</span></div><div class="cell" style="left:1319.60px;top:497.86px;width:117.13px;height:32.62px;"><span class="t td" style="left:4.34px;top:5.82px">否</span></div><div class="cell" style="left:1437.56px;top:497.86px;width:116.80px;height:32.62px;"><span class="t td lk" style="left:4.34px;top:5.82px">详情</span></div><div class="cell" style="left:210.05px;top:530.48px;width:82.37px;height:32.62px;"><span class="t td n0" style="left:4.34px;top:5.82px">GZBX2018032</span></div><div class="cell" style="left:293.25px;top:530.48px;width:117.13px;height:32.62px;"><span class="t td" style="left:4.34px;top:5.82px">普通车床-016-162</span></div><div class="cell" style="left:411.20px;top:530.48px;width:82.87px;height:32.62px;"><span class="t td" style="left:4.34px;top:5.82px">钢结构车间-折</span></div><div class="cell" style="left:494.89px;top:530.48px;width:116.47px;height:32.62px;"><span class="t td" style="left:4.34px;top:5.82px">中</span></div><div class="cell" style="left:612.19px;top:530.48px;width:116.97px;height:32.62px;"><span class="t td" style="left:4.34px;top:5.82px">油压故障</span></div><div class="cell" style="left:729.98px;top:530.48px;width:117.30px;height:32.62px;"><span class="t td" style="left:4.34px;top:5.82px">油压值不在正常范围</span></div><div class="cell" style="left:848.11px;top:530.48px;width:116.97px;height:32.62px;"><span class="t td" style="left:4.34px;top:5.82px">日常润滑任务</span></div><div class="cell" style="left:965.90px;top:530.48px;width:117.30px;height:32.62px;"><span class="t td" style="left:4.34px;top:5.82px">杨帆</span></div><div class="cell" style="left:1084.02px;top:530.48px;width:116.64px;height:32.62px;"><span class="t td n8" style="left:4.34px;top:5.82px">2018-03-21</span></div><div class="cell" style="left:1201.48px;top:530.48px;width:117.30px;height:32.62px;"><span class="t td" style="left:4.34px;top:5.82px">报修</span></div><div class="cell" style="left:1319.60px;top:530.48px;width:117.13px;height:32.62px;"><span class="t td" style="left:4.34px;top:5.82px">否</span></div><div class="cell" style="left:1437.56px;top:530.48px;width:116.80px;height:32.62px;"><span class="t td lk" style="left:4.34px;top:5.82px">详情</span></div><div class="cell" style="left:210.05px;top:563.10px;width:82.37px;height:32.62px;"><span class="t td n0" style="left:4.34px;top:5.82px">GZBX2018032</span></div><div class="cell" style="left:293.25px;top:563.10px;width:117.13px;height:32.62px;"><span class="t td" style="left:4.34px;top:5.82px">普通车床-016-162</span></div><div class="cell" style="left:411.20px;top:563.10px;width:82.87px;height:32.62px;"><span class="t td" style="left:4.34px;top:5.82px">钢结构车间-折</span></div><div class="cell" style="left:494.89px;top:563.10px;width:116.47px;height:32.62px;"><span class="t td" style="left:4.34px;top:5.82px">低</span></div><div class="cell" style="left:612.19px;top:563.10px;width:116.97px;height:32.62px;"><span class="t td" style="left:4.34px;top:5.82px">油压故障</span></div><div class="cell" style="left:729.98px;top:563.10px;width:117.30px;height:32.62px;"><span class="t td" style="left:4.34px;top:5.82px">油压值不在正常范围</span></div><div class="cell" style="left:848.11px;top:563.10px;width:116.97px;height:32.62px;"><span class="t td" style="left:4.34px;top:5.82px">日常润滑任务</span></div><div class="cell" style="left:965.90px;top:563.10px;width:117.30px;height:32.62px;"><span class="t td" style="left:4.34px;top:5.82px">杨帆</span></div><div class="cell" style="left:1084.02px;top:563.10px;width:116.64px;height:32.62px;"><span class="t td n8" style="left:4.34px;top:5.82px">2018-03-21</span></div><div class="cell" style="left:1201.48px;top:563.10px;width:117.30px;height:32.62px;"><span class="t td" style="left:4.34px;top:5.82px">报修</span></div><div class="cell" style="left:1319.60px;top:563.10px;width:117.13px;height:32.62px;"><span class="t td" style="left:4.34px;top:5.82px">否</span></div><div class="cell" style="left:1437.56px;top:563.10px;width:116.80px;height:32.62px;"><span class="t td lk" style="left:4.34px;top:5.82px">详情</span></div><div style="left:210.05px;top:357.50px;width:1318.78px;height:1.65px;background:#e5e5e5;"></div><div style="left:210.05px;top:398.68px;width:1318.78px;height:1.65px;background:#e5e5e5;"></div><div style="left:210.05px;top:431.63px;width:1318.78px;height:1.65px;background:#e5e5e5;"></div><div style="left:210.05px;top:464.58px;width:1318.78px;height:1.65px;background:#e5e5e5;"></div><div style="left:210.05px;top:497.53px;width:1318.78px;height:1.65px;background:#e5e5e5;"></div><div style="left:210.05px;top:530.48px;width:1318.78px;height:1.65px;background:#e5e5e5;"></div><div style="left:210.05px;top:563.43px;width:1318.78px;height:1.65px;background:#e5e5e5;"></div><div style="left:209.23px;top:357.50px;width:1.65px;height:235.58px;background:#e7e7e7;"></div><div style="left:293.25px;top:357.50px;width:1.65px;height:235.58px;background:#e7e7e7;"></div><div style="left:410.21px;top:357.50px;width:1.65px;height:235.58px;background:#e7e7e7;"></div><div style="left:494.23px;top:357.50px;width:1.65px;height:235.58px;background:#e7e7e7;"></div><div style="left:611.20px;top:357.50px;width:1.65px;height:235.58px;background:#e7e7e7;"></div><div style="left:729.82px;top:357.50px;width:1.65px;height:235.58px;background:#e7e7e7;"></div><div style="left:846.79px;top:357.50px;width:1.65px;height:235.58px;background:#e7e7e7;"></div><div style="left:965.40px;top:357.50px;width:1.65px;height:235.58px;background:#e7e7e7;"></div><div style="left:1084.02px;top:357.50px;width:1.65px;height:235.58px;background:#e7e7e7;"></div><div style="left:1200.99px;top:357.50px;width:1.65px;height:235.58px;background:#e7e7e7;"></div><div style="left:1319.60px;top:357.50px;width:1.65px;height:235.58px;background:#e7e7e7;"></div><div style="left:1436.57px;top:357.50px;width:1.65px;height:235.58px;background:#e7e7e7;"></div><div class="sbg" style="left:0.00px;top:0.00px;width:188.14px;height:588.14px;"></div><div class="it" style="left:0.00px;top:-6.34px;width:188.14px;height:40.12px;"></div><div style="left:0.00px;top:-6.84px;width:188.14px;height:1.00px;background:#e5e5e5;"></div><svg class="ic" style="left:11.07px;top:4.08px;width:20.36px;height:16.83px;color:#585858;" viewBox="0 0 18 16" preserveAspectRatio="none"><path fill="currentColor" d="M9 1.600a8.300 8.300 0 0 0-8.300 8.300c0 1.600.5 3.100 1.300 4.400.15.2.35.3.6.3h12.800c.25 0 .45-.1.6-.3a8.300 8.300 0 0 0 1.300-4.400A8.300 8.300 0 0 0 9 1.600z"/><g fill="#fff"><circle cx="3.600" cy="10" r="1.100"/><circle cx="5" cy="6.200" r="1.100"/><circle cx="9" cy="4.500" r="1.100"/><circle cx="14.400" cy="10" r="1.100"/><circle cx="9" cy="12" r="1.800"/><path d="M8.300 11.500l2.700-6.800 1.200.5-2.500 6.900z"/></g></svg><span class="t lb" style="left:42.73px;top:2.52px;line-height:20px;">个人工作台</span><div class="it" style="left:0.00px;top:33.77px;width:188.14px;height:40.12px;"></div><div style="left:0.00px;top:33.27px;width:188.14px;height:1.00px;background:#e5e5e5;"></div><svg class="ic" style="left:11.30px;top:43.68px;width:19.05px;height:19.22px;color:#585858;" viewBox="0 0 14 16" preserveAspectRatio="none"><path fill="currentColor" d="M1.500.8h6.500v4.700h4.700v9.700H1.500z"/><path fill="currentColor" d="M9 .8l3.700 3.700H9z"/></svg><span class="t lb" style="left:42.73px;top:42.64px;line-height:20px;">工单</span><svg class="ic" style="left:164.84px;top:47.71px;width:12px;height:12px;color:#666;" viewBox="0 0 12 12"><path fill="none" stroke="currentColor" stroke-width="1.500" d="M1.500 3.700L6 8.200l4.500-4.500"/></svg><div class="it" style="left:0.00px;top:73.89px;width:188.14px;height:40.12px;"></div><div style="left:0.00px;top:73.39px;width:188.14px;height:1.00px;background:#e5e5e5;"></div><svg class="ic" style="left:11.93px;top:83.47px;width:18.89px;height:17.57px;color:#585858;" viewBox="0 0 16 16" preserveAspectRatio="none"><g fill="currentColor"><rect x=".5" y="2" width="4" height="3.200" rx=".5"/><rect x="5.500" y="2" width="10" height="3.200" rx=".5"/><rect x=".5" y="6.400" width="4" height="3.200" rx=".5"/><rect x="5.500" y="6.400" width="10" height="3.200" rx=".5"/><rect x=".5" y="10.800" width="4" height="3.200" rx=".5"/><rect x="5.500" y="10.800" width="10" height="3.200" rx=".5"/></g></svg><span class="t lb" style="left:42.73px;top:82.75px;line-height:20px;">设备资产</span><svg class="ic" style="left:164.84px;top:87.82px;width:12px;height:12px;color:#666;" viewBox="0 0 12 12"><path fill="none" stroke="currentColor" stroke-width="1.500" d="M1.500 3.700L6 8.200l4.500-4.500"/></svg><div class="it" style="left:0.00px;top:114.00px;width:188.14px;height:40.12px;"></div><div style="left:0.00px;top:113.50px;width:188.14px;height:1.00px;background:#e5e5e5;"></div><svg class="ic" style="left:11.37px;top:123.53px;width:19.86px;height:18.11px;color:#585858;" viewBox="0 0 18 16" preserveAspectRatio="none"><g fill="none" stroke="currentColor"><circle cx="6" cy="8.500" r="3" stroke-width="2.600"/><circle cx="6" cy="8.500" r="4.700" stroke-width="2" stroke-dasharray="2.300 1.400"/><circle cx="14" cy="4" r="1.500" stroke-width="1.500"/><circle cx="14" cy="4" r="2.500" stroke-width="1.200" stroke-dasharray="1.200 .76"/><circle cx="14" cy="12.500" r="1.500" stroke-width="1.500"/><circle cx="14" cy="12.500" r="2.500" stroke-width="1.200" stroke-dasharray="1.200 .76"/></g></svg><span class="t lb" style="left:42.73px;top:122.87px;line-height:20px;">设置</span><svg class="ic" style="left:164.84px;top:127.94px;width:12px;height:12px;color:#666;" viewBox="0 0 12 12"><path fill="none" stroke="currentColor" stroke-width="1.500" d="M1.500 3.700L6 8.200l4.500-4.500"/></svg><div class="it" style="left:0.00px;top:154.12px;width:188.14px;height:40.12px;"></div><div style="left:0.00px;top:153.62px;width:188.14px;height:1.00px;background:#e5e5e5;"></div><svg class="ic" style="left:15.46px;top:164.25px;width:12.41px;height:15.82px;color:#585858;" viewBox="0 0 12 16" preserveAspectRatio="none"><path fill="currentColor" d="M6 1C6 1 1.300 7 1.300 10.300a4.700 4.700 0 0 0 9.400 0C10.700 7 6 1 6 1z"/><path fill="#fff" opacity=".55" d="M6 13.300c-1 0-1.900-.8-1.900-1.900 0-.8.700-1.700 1.100-2.200.4.700.8 1.400.8 2.200z"/></svg><span class="t lb" style="left:42.73px;top:162.98px;line-height:20px;">设备维护</span><svg class="ic" style="left:164.84px;top:168.05px;width:12px;height:12px;color:#666;" viewBox="0 0 12 12"><path fill="none" stroke="currentColor" stroke-width="1.500" d="M1.500 3.700L6 8.200l4.500-4.500"/></svg><div class="it act" style="left:0.00px;top:194.23px;width:188.14px;height:40.12px;"></div><div style="left:0.00px;top:193.73px;width:188.14px;height:1.00px;background:#e5e5e5;"></div><svg class="ic" style="left:12.37px;top:206.25px;width:17.22px;height:16.28px;color:#2b7dbc;" viewBox="0 0 16 16" preserveAspectRatio="none"><path fill="currentColor" d="M1.100 12.400L7.500 6l2.500 2.500-6.400 6.400A1.770 1.770 0 0 1 1.100 12.400z"/><path fill="currentColor" d="M15.400 3.600A4.600 4.600 0 1 1 12.400.6L10 3l.5 2.500 2.500.5z"/></svg><span class="t lb act" style="left:42.73px;top:203.10px;line-height:20px;">故障维修</span><svg class="ic" style="left:164.84px;top:208.17px;width:12px;height:12px;color:#2b7dbc;" viewBox="0 0 12 12"><path fill="none" stroke="currentColor" stroke-width="1.500" d="M1.500 3.700L6 8.200l4.500-4.500"/></svg><div class="sit" style="left:0.00px;top:234.35px;width:188.14px;height:36.49px;"></div><div style="left:0.00px;top:233.85px;width:188.14px;height:1.00px;background:#ececec;"></div><svg class="ic" style="left:14.62px;top:246.98px;width:7px;height:10px;color:#c86139;" viewBox="0 0 8 12"><path fill="currentColor" d="M1.500 1.500L6.500 6l-5 4.500z"/></svg><span class="t slb sact" style="left:35.97px;top:242.96px;line-height:20px;">故障报修记录单</span><div class="sit" style="left:0.00px;top:270.84px;width:188.14px;height:36.49px;"></div><div style="left:0.00px;top:270.34px;width:188.14px;height:1.00px;background:#ececec;"></div><span class="t slb" style="left:35.97px;top:278.55px;line-height:20px;">维修任务派工单</span><div class="sit" style="left:0.00px;top:307.33px;width:188.14px;height:36.49px;"></div><div style="left:0.00px;top:306.83px;width:188.14px;height:1.00px;background:#ececec;"></div><span class="t slb" style="left:35.97px;top:315.04px;line-height:20px;">故障派工维修记录单</span><div class="it" style="left:0.00px;top:343.82px;width:188.14px;height:40.12px;"></div><div style="left:0.00px;top:343.32px;width:188.14px;height:1.00px;background:#e5e5e5;"></div><svg class="ic" style="left:9.88px;top:354.62px;width:21.53px;height:16.66px;color:#585858;" viewBox="0 0 18 16" preserveAspectRatio="none"><path fill="none" stroke="currentColor" stroke-width="1.300" d="M1 1.500v12.800h16.500"/><path fill="none" stroke="currentColor" stroke-width="2.500" stroke-linejoin="round" d="M3 12.200l3.900-4.400 2.600 2.500 4.800-5.400"/><path fill="currentColor" d="M11.300 2.300h5.800v5.800z"/></svg><span class="t lb" style="left:42.73px;top:352.69px;line-height:20px;">数据分析</span><svg class="ic" style="left:164.84px;top:357.76px;width:12px;height:12px;color:#666;" viewBox="0 0 12 12"><path fill="none" stroke="currentColor" stroke-width="1.500" d="M1.500 3.700L6 8.200l4.500-4.500"/></svg><div class="it" style="left:0.00px;top:383.94px;width:188.14px;height:40.12px;"></div><div style="left:0.00px;top:383.44px;width:188.14px;height:1.00px;background:#e5e5e5;"></div><svg class="ic" style="left:9.88px;top:394.73px;width:21.53px;height:17.54px;color:#585858;" viewBox="0 0 18 16" preserveAspectRatio="none"><path fill="none" stroke="currentColor" stroke-width="1.300" d="M1 1.500v12.800h16.500"/><g fill="currentColor"><rect x="3.500" y="9" width="2.300" height="4"/><rect x="7" y="5" width="2.300" height="8"/><rect x="10.500" y="7" width="2.300" height="6"/><rect x="14" y="3" width="2.300" height="10"/></g></svg><span class="t lb" style="left:42.73px;top:392.80px;line-height:20px;">设备故障分析</span><svg class="ic" style="left:164.84px;top:397.87px;width:12px;height:12px;color:#666;" viewBox="0 0 12 12"><path fill="none" stroke="currentColor" stroke-width="1.500" d="M1.500 3.700L6 8.200l4.500-4.500"/></svg><div class="it" style="left:0.00px;top:424.05px;width:188.14px;height:40.12px;"></div><div style="left:0.00px;top:423.55px;width:188.14px;height:1.00px;background:#e5e5e5;"></div><svg class="ic" style="left:15.03px;top:435.56px;width:11.79px;height:15.51px;color:#585858;" viewBox="0 0 12 16" preserveAspectRatio="none"><path fill="currentColor" d="M1 7.500h10c.4 0 .7.300.7.700v6c0 .4-.3.700-.7.700H1c-.4 0-.7-.3-.7-.7v-6c0-.4.300-.7.700-.7z"/><path fill="none" stroke="currentColor" stroke-width="1.900" d="M2.700 8V5.300a3.300 3.300 0 0 1 6.600 0V8"/></svg><span class="t lb" style="left:42.73px;top:432.92px;line-height:20px;">备件物资</span><svg class="ic" style="left:164.84px;top:437.99px;width:12px;height:12px;color:#666;" viewBox="0 0 12 12"><path fill="none" stroke="currentColor" stroke-width="1.500" d="M1.500 3.700L6 8.200l4.500-4.500"/></svg><div class="it" style="left:0.00px;top:464.17px;width:188.14px;height:40.12px;"></div><div style="left:0.00px;top:463.67px;width:188.14px;height:1.00px;background:#e5e5e5;"></div><svg class="ic" style="left:17.32px;top:475.95px;width:7.99px;height:15.82px;color:#585858;" viewBox="0 0 8 16" preserveAspectRatio="none"><g fill="currentColor"><rect x="2.200" y="1" width="3.800" height="3.300" rx=".4"/><path d="M.8 6.300h5.200v6.500h1.400v2.200H.8v-2.200h1.400v-4.300H.8z"/></g></svg><span class="t lb" style="left:42.73px;top:473.03px;line-height:20px;">知识库</span><svg class="ic" style="left:164.84px;top:478.10px;width:12px;height:12px;color:#666;" viewBox="0 0 12 12"><path fill="none" stroke="currentColor" stroke-width="1.500" d="M1.500 3.700L6 8.200l4.500-4.500"/></svg><div class="it" style="left:0.00px;top:504.28px;width:188.14px;height:40.12px;"></div><div style="left:0.00px;top:503.78px;width:188.14px;height:1.00px;background:#e5e5e5;"></div><svg class="ic" style="left:9.88px;top:515.14px;width:19.85px;height:17.85px;color:#585858;" viewBox="0 0 18 16" preserveAspectRatio="none"><rect x="1" y="1.600" width="16" height="10.600" rx="1.200" fill="none" stroke="currentColor" stroke-width="1.400"/><path fill="currentColor" d="M7 12.200h4l.4 1.800h1.100v1H5.500v-1h1.100z"/></svg><span class="t lb" style="left:42.73px;top:513.15px;line-height:20px;">大屏设置</span><svg class="ic" style="left:164.84px;top:518.22px;width:12px;height:12px;color:#666;" viewBox="0 0 12 12"><path fill="none" stroke="currentColor" stroke-width="1.500" d="M1.500 3.700L6 8.200l4.500-4.500"/></svg><div style="left:0.00px;top:543.90px;width:188.14px;height:1.00px;background:#e5e5e5;"></div><div style="left:0.00px;top:544.40px;width:188.14px;height:26.44px;background:#f3f3f3;"></div><div style="left:0.00px;top:570.34px;width:188.14px;height:1.00px;background:#e0e0e0;"></div><div style="left:14.83px;top:557.65px;width:158.15px;height:1.00px;background:#e6e6e6;"></div><div class="tb" style="left:82.86px;top:547.77px;width:20.60px;height:19.95px;"></div><svg class="ic" style="left:88.41px;top:553.15px;width:10px;height:10px;color:#aaa;" viewBox="0 0 12 12"><path fill="none" stroke="currentColor" stroke-width="1.300" d="M6 2L2 6l4 4M10.500 2l-4 4 4 4"/></svg><div style="left:188.13px;top:-1.65px;width:1.00px;height:591.43px;background:#ccc;"></div><div style="left:187.96px;top:194.23px;width:2.00px;height:149.59px;background:#2b7dbc;"></div><svg class="ic" style="left:180.07px;top:240.03px;width:9.88px;height:23.72px;color:#2b7dbc" viewBox="0 0 10 24" preserveAspectRatio="none"><path fill="currentColor" d="M10 0v24L0 12z"/></svg></div></div><div class="shot" style="left:182px;top:386px;width:922px;height:330px;"><div class="pg" style="transform:scale(0.576)"><div class="bc" style="left:190.45px;top:-1.74px;width:1411.98px;height:38.19px;"></div><div style="left:190.45px;top:36.48px;width:1411.98px;height:1.00px;background:#e5e5e5;"></div><svg class="ic" style="left:208.01px;top:7.63px;width:18px;height:16px;color:#4c4c4c;" viewBox="0 0 18 16"><path fill="currentColor" d="M9 3.700l5.900 4.900v5.300c0 .3-.2.500-.5.500h-3.700v-4H7.300v4H3.600c-.3 0-.5-.2-.5-.5V8.600z"/><path fill="currentColor" d="M9 1l8.300 6.900-.9 1.100L9 2.900 1.600 9 .7 7.900z M13.300 1.800h2v3.200l-2-1.700z"/></svg><svg class="ic" style="left:235.80px;top:11.32px;width:10px;height:10px;color:#b2b6bf;" viewBox="0 0 12 12"><path fill="none" stroke="currentColor" stroke-width="1.300" d="M4 2l4 4-4 4"/></svg><span class="t" style="left:256.34px;top:5.63px;line-height:20px;color:#555;">备件物资</span><svg class="ic" style="left:315.66px;top:11.32px;width:10px;height:10px;color:#b2b6bf;" viewBox="0 0 12 12"><path fill="none" stroke="currentColor" stroke-width="1.300" d="M4 2l4 4-4 4"/></svg><span class="t" style="left:335.16px;top:5.63px;line-height:20px;color:#5791ba;">库存管理</span><span class="t h1" style="left:211.55px;top:61.48px;line-height:30px;">库存管理</span><div style="left:210.42px;top:93.94px;width:1368.75px;height:1.00px;background:#e1eaf2;"></div><div class="panel" style="left:240.30px;top:111.83px;width:1309.85px;height:174.44px;"></div><span class="t lab" style="left:268.01px;top:143.85px;line-height:20px;">所属仓库：</span><div class="sel" style="left:353.84px;top:137.35px;width:166.97px;height:34.33px;"></div><span class="t ph" style="left:364.50px;top:147.29px;line-height:20px;font-size:14px;">---请选择所属仓库---</span><div class="dd" style="left:496.25px;top:142.78px;width:18.26px;height:23.99px;"></div><svg class="ic" style="left:501.18px;top:152.47px;width:8.400px;height:5px" viewBox="0 0 8.400 5"><path fill="#111" d="M0 0h8.400L4.200 5z"/></svg><span class="t lab" style="left:530.13px;top:142.95px;line-height:20px;">所属分区/货架：</span><div class="sel" style="left:635.26px;top:137.35px;width:198.22px;height:34.33px;"></div><span class="t ph" style="left:645.58px;top:147.29px;line-height:20px;font-size:14px;">---请选择所属分区/货架---</span><div class="dd" style="left:808.40px;top:142.78px;width:18.26px;height:23.99px;"></div><svg class="ic" style="left:813.33px;top:152.47px;width:8.400px;height:5px" viewBox="0 0 8.400 5"><path fill="#111" d="M0 0h8.400L4.200 5z"/></svg><span class="t lab" style="left:842.80px;top:142.95px;line-height:20px;">所属库位：</span><div class="sel" style="left:918.25px;top:137.35px;width:151.52px;height:34.33px;"></div><span class="t ph" style="left:927.35px;top:147.29px;line-height:20px;font-size:14px;">---请选择所库位---</span><div class="dd" style="left:1044.69px;top:142.78px;width:18.26px;height:23.99px;"></div><svg class="ic" style="left:1049.62px;top:152.47px;width:8.400px;height:5px" viewBox="0 0 8.400 5"><path fill="#111" d="M0 0h8.400L4.200 5z"/></svg><span class="t lab" style="left:267.11px;top:186.70px;line-height:20px;">物资检索码：</span><div class="inp" style="left:353.84px;top:180.75px;width:166.97px;height:34.85px;"></div><div class="btn" style="left:256.77px;top:235.76px;width:77.26px;height:33.33px;"><svg class="bi" style="width:14.5px;height:14.5px;margin-right:8.5px" viewBox="0 0 16 16"><circle cx="6.500" cy="6.500" r="4.600" fill="none" stroke="currentColor" stroke-width="2.200"/><path stroke="currentColor" stroke-width="2.600" stroke-linecap="round" d="M10.300 10.300l4 4"/></svg><span>查询</span></div><div class="btn" style="left:346.18px;top:235.76px;width:51.91px;height:33.33px;"><span>入库</span></div><div class="btn" style="left:409.90px;top:235.76px;width:52.43px;height:33.33px;"><span>归还</span></div><div class="btn" style="left:473.96px;top:235.76px;width:52.43px;height:33.33px;"><span>出库</span></div><div class="btn" style="left:538.02px;top:235.76px;width:52.43px;height:33.33px;"><span>借出</span></div><div class="btn" style="left:602.26px;top:235.76px;width:52.43px;height:33.33px;"><span>耗损</span></div><div class="btn" style="left:666.49px;top:235.76px;width:71.18px;height:33.33px;"><svg class="bi" style="width:14.5px;height:14.5px;margin-right:8.5px" viewBox="0 0 16 16"><circle cx="6.500" cy="6.500" r="4.600" fill="none" stroke="currentColor" stroke-width="2.200"/><path stroke="currentColor" stroke-width="2.600" stroke-linecap="round" d="M10.300 10.300l4 4"/><path stroke="currentColor" stroke-width="1.500" d="M4.200 6.500h4.600M6.500 4.200v4.600"/></svg><span>详情</span></div><div class="gtitle" style="left:241.15px;top:306.08px;width:1306.42px;height:40.63px;"></div><span class="t" style="left:248.88px;top:315.87px;line-height:20px;color:#fff;font-size:14.500px;">库存记录</span><svg class="ic" style="left:1523.21px;top:320.08px;width:14px;height:14px;color:#fff;" viewBox="0 0 16 16"><path fill="none" stroke="currentColor" stroke-width="3" d="M2.200 11.500L8 5.700l5.800 5.800"/></svg><div class="ghead" style="left:241.15px;top:346.70px;width:1306.42px;height:41.15px;"></div><span class="t th" style="left:272.66px;top:356.15px;line-height:20px;">仓库名称</span><span class="t th" style="left:441.07px;top:356.15px;line-height:20px;">分区名称</span><span class="t th" style="left:609.30px;top:356.15px;line-height:20px;">库位名称</span><span class="t th" style="left:846.10px;top:356.15px;line-height:20px;">物资名称</span><span class="t th" style="left:1083.08px;top:356.15px;line-height:20px;">库存数量</span><span class="t th" style="left:1319.19px;top:356.15px;line-height:20px;">在库数量</span><div style="left:264.26px;top:346.70px;width:1.00px;height:41.15px;background:#ddd;"></div><div style="left:432.66px;top:346.70px;width:1.00px;height:41.15px;background:#ddd;"></div><div style="left:600.89px;top:346.70px;width:1.00px;height:41.15px;background:#ddd;"></div><div style="left:837.69px;top:346.70px;width:1.00px;height:41.15px;background:#ddd;"></div><div style="left:1074.67px;top:346.70px;width:1.00px;height:41.15px;background:#ddd;"></div><div style="left:1310.78px;top:346.70px;width:1.00px;height:41.15px;background:#ddd;"></div><div style="left:241.15px;top:387.35px;width:1306.42px;height:1.00px;background:#ddd;"></div><div class="hsb" style="left:241.15px;top:388.72px;width:1306.42px;height:16.67px;"></div><svg class="ic" style="left:245.31px;top:393.58px;width:4.51px;height:6.60px" viewBox="0 0 6 8" preserveAspectRatio="none"><path fill="#6a6a6a" d="M6 0v8L0 4z"/></svg><svg class="ic" style="left:1536.81px;top:393.58px;width:4.51px;height:6.60px" viewBox="0 0 6 8" preserveAspectRatio="none"><path fill="#6a6a6a" d="M0 0v8l6-4z"/></svg><div style="left:241.15px;top:404.88px;width:1306.42px;height:1.00px;background:#ddd;"></div><div class="pager" style="left:241.15px;top:405.90px;width:1306.42px;height:54.51px;"></div><div style="left:241.15px;top:459.92px;width:1306.42px;height:1.00px;background:#e1e1e1;"></div><div class="pgb dis" style="left:753.15px;top:411.13px;width:24.96px;height:24.44px;"></div><svg class="ic" style="left:759.63px;top:417.52px;width:12px;height:12px;color:#b5b5b5;" viewBox="0 0 12 12"><path fill="none" stroke="currentColor" stroke-width="1.300" d="M6 2L2 6l4 4M10.500 2l-4 4 4 4"/></svg><div class="pgb dis" style="left:783.18px;top:411.13px;width:26.00px;height:24.44px;"></div><svg class="ic" style="left:790.18px;top:417.52px;width:12px;height:12px;color:#b5b5b5;" viewBox="0 0 12 12"><path fill="none" stroke="currentColor" stroke-width="1.300" d="M8 2L4 6l4 4"/></svg><div style="left:816.86px;top:414.58px;width:1.00px;height:18.40px;background:#c3c9d3;"></div><div style="left:828.65px;top:412.15px;width:27.26px;height:22.57px;background:#fff;"></div><span class="t" style="left:832.36px;width:20px;text-align:center;top:412.40px;line-height:20px;color:#777;font-size:12.500px;">1</span><span class="t" style="left:860.51px;top:413.30px;line-height:20px;color:#393939;">共 0 页</span><div style="left:908.35px;top:414.58px;width:1.00px;height:18.40px;background:#c3c9d3;"></div><div class="pgb" style="left:916.51px;top:411.13px;width:24.96px;height:24.44px;"></div><svg class="ic" style="left:922.99px;top:417.52px;width:12px;height:12px;color:#808080;" viewBox="0 0 12 12"><path fill="none" stroke="currentColor" stroke-width="1.300" d="M4 2l4 4-4 4"/></svg><div class="pgb" style="left:946.55px;top:411.13px;width:25.65px;height:24.44px;"></div><svg class="ic" style="left:953.38px;top:417.52px;width:12px;height:12px;color:#808080;" viewBox="0 0 12 12"><path fill="none" stroke="currentColor" stroke-width="1.300" d="M6 2l4 4-4 4M1.500 2l4 4-4 4"/></svg><div style="left:976.04px;top:412.85px;width:57.99px;height:22.22px;background:#fff;"></div><span class="t" style="left:979.78px;top:413.96px;line-height:20px;color:#777;font-size:12.500px;">10</span><div class="dd" style="left:1017.78px;top:413.09px;width:16.53px;height:21.91px;"></div><svg class="ic" style="left:1021.84px;top:421.75px;width:8.400px;height:5px" viewBox="0 0 8.400 5"><path fill="#111" d="M0 0h8.400L4.200 5z"/></svg><span class="t" style="left:1468.15px;top:412.57px;line-height:20px;color:#393939;">无数据显示</span><div class="sbg" style="left:0.00px;top:0.00px;width:182.29px;height:572.92px;"></div><div class="it" style="left:0.00px;top:-6.25px;width:182.29px;height:40.10px;"></div><div style="left:0.00px;top:-6.75px;width:182.29px;height:1.00px;background:#e5e5e5;"></div><svg class="ic" style="left:12.13px;top:4.20px;width:20.33px;height:16.79px;color:#585858;" viewBox="0 0 18 16" preserveAspectRatio="none"><path fill="currentColor" d="M9 1.600a8.300 8.300 0 0 0-8.300 8.300c0 1.600.5 3.100 1.300 4.400.15.2.35.3.6.3h12.800c.25 0 .45-.1.6-.3a8.300 8.300 0 0 0 1.300-4.400A8.300 8.300 0 0 0 9 1.600z"/><g fill="#fff"><circle cx="3.600" cy="10" r="1.100"/><circle cx="5" cy="6.200" r="1.100"/><circle cx="9" cy="4.500" r="1.100"/><circle cx="14.400" cy="10" r="1.100"/><circle cx="9" cy="12" r="1.800"/><path d="M8.300 11.500l2.700-6.800 1.200.5-2.500 6.900z"/></g></svg><span class="t lb" style="left:43.84px;top:3.63px;line-height:20px;">个人工作台</span><div class="it" style="left:0.00px;top:33.85px;width:182.29px;height:40.10px;"></div><div style="left:0.00px;top:33.35px;width:182.29px;height:1.00px;background:#e5e5e5;"></div><svg class="ic" style="left:12.37px;top:43.79px;width:19.00px;height:19.18px;color:#585858;" viewBox="0 0 14 16" preserveAspectRatio="none"><path fill="currentColor" d="M1.500.8h6.500v4.700h4.700v9.700H1.500z"/><path fill="currentColor" d="M9 .8l3.700 3.700H9z"/></svg><span class="t lb" style="left:43.84px;top:43.73px;line-height:20px;">工单</span><svg class="ic" style="left:166.40px;top:48.86px;width:12px;height:12px;color:#666;" viewBox="0 0 12 12"><path fill="none" stroke="currentColor" stroke-width="1.500" d="M1.500 3.700L6 8.200l4.500-4.500"/></svg><div class="it" style="left:0.00px;top:73.96px;width:182.29px;height:40.10px;"></div><div style="left:0.00px;top:73.46px;width:182.29px;height:1.00px;background:#e5e5e5;"></div><svg class="ic" style="left:12.99px;top:83.56px;width:18.85px;height:17.53px;color:#585858;" viewBox="0 0 16 16" preserveAspectRatio="none"><g fill="currentColor"><rect x=".5" y="2" width="4" height="3.200" rx=".5"/><rect x="5.500" y="2" width="10" height="3.200" rx=".5"/><rect x=".5" y="6.400" width="4" height="3.200" rx=".5"/><rect x="5.500" y="6.400" width="10" height="3.200" rx=".5"/><rect x=".5" y="10.800" width="4" height="3.200" rx=".5"/><rect x="5.500" y="10.800" width="10" height="3.200" rx=".5"/></g></svg><span class="t lb" style="left:43.84px;top:83.84px;line-height:20px;">设备资产</span><svg class="ic" style="left:166.40px;top:88.97px;width:12px;height:12px;color:#666;" viewBox="0 0 12 12"><path fill="none" stroke="currentColor" stroke-width="1.500" d="M1.500 3.700L6 8.200l4.500-4.500"/></svg><div class="it" style="left:0.00px;top:114.06px;width:182.29px;height:40.10px;"></div><div style="left:0.00px;top:113.56px;width:182.29px;height:1.00px;background:#e5e5e5;"></div><svg class="ic" style="left:12.43px;top:123.61px;width:19.82px;height:18.07px;color:#585858;" viewBox="0 0 18 16" preserveAspectRatio="none"><g fill="none" stroke="currentColor"><circle cx="6" cy="8.500" r="3" stroke-width="2.600"/><circle cx="6" cy="8.500" r="4.700" stroke-width="2" stroke-dasharray="2.300 1.400"/><circle cx="14" cy="4" r="1.500" stroke-width="1.500"/><circle cx="14" cy="4" r="2.500" stroke-width="1.200" stroke-dasharray="1.200 .76"/><circle cx="14" cy="12.500" r="1.500" stroke-width="1.500"/><circle cx="14" cy="12.500" r="2.500" stroke-width="1.200" stroke-dasharray="1.200 .76"/></g></svg><span class="t lb" style="left:43.84px;top:123.94px;line-height:20px;">设置</span><svg class="ic" style="left:166.40px;top:129.07px;width:12px;height:12px;color:#666;" viewBox="0 0 12 12"><path fill="none" stroke="currentColor" stroke-width="1.500" d="M1.500 3.700L6 8.200l4.500-4.500"/></svg><div class="it" style="left:0.00px;top:154.17px;width:182.29px;height:40.10px;"></div><div style="left:0.00px;top:153.67px;width:182.29px;height:1.00px;background:#e5e5e5;"></div><svg class="ic" style="left:16.52px;top:164.32px;width:12.36px;height:15.77px;color:#585858;" viewBox="0 0 12 16" preserveAspectRatio="none"><path fill="currentColor" d="M6 1C6 1 1.300 7 1.300 10.300a4.700 4.700 0 0 0 9.400 0C10.700 7 6 1 6 1z"/><path fill="#fff" opacity=".55" d="M6 13.300c-1 0-1.900-.8-1.900-1.900 0-.8.700-1.700 1.100-2.200.4.700.8 1.400.8 2.200z"/></svg><span class="t lb" style="left:43.84px;top:164.05px;line-height:20px;">设备维护</span><svg class="ic" style="left:166.40px;top:169.17px;width:12px;height:12px;color:#666;" viewBox="0 0 12 12"><path fill="none" stroke="currentColor" stroke-width="1.500" d="M1.500 3.700L6 8.200l4.500-4.500"/></svg><div class="it" style="left:0.00px;top:194.27px;width:182.29px;height:40.10px;"></div><div style="left:0.00px;top:193.77px;width:182.29px;height:1.00px;background:#e5e5e5;"></div><svg class="ic" style="left:13.43px;top:206.30px;width:17.18px;height:16.24px;color:#585858;" viewBox="0 0 16 16" preserveAspectRatio="none"><path fill="currentColor" d="M1.100 12.400L7.500 6l2.500 2.500-6.400 6.400A1.770 1.770 0 0 1 1.100 12.400z"/><path fill="currentColor" d="M15.400 3.600A4.600 4.600 0 1 1 12.400.6L10 3l.5 2.500 2.500.5z"/></svg><span class="t lb" style="left:43.84px;top:204.15px;line-height:20px;">故障维修</span><svg class="ic" style="left:166.40px;top:209.28px;width:12px;height:12px;color:#666;" viewBox="0 0 12 12"><path fill="none" stroke="currentColor" stroke-width="1.500" d="M1.500 3.700L6 8.200l4.500-4.500"/></svg><div class="it" style="left:0.00px;top:234.38px;width:182.29px;height:40.10px;"></div><div style="left:0.00px;top:233.88px;width:182.29px;height:1.00px;background:#e5e5e5;"></div><svg class="ic" style="left:10.94px;top:245.19px;width:21.49px;height:16.62px;color:#585858;" viewBox="0 0 18 16" preserveAspectRatio="none"><path fill="none" stroke="currentColor" stroke-width="1.300" d="M1 1.500v12.800h16.500"/><path fill="none" stroke="currentColor" stroke-width="2.500" stroke-linejoin="round" d="M3 12.200l3.900-4.400 2.600 2.500 4.800-5.400"/><path fill="currentColor" d="M11.300 2.300h5.800v5.800z"/></svg><span class="t lb" style="left:43.84px;top:244.25px;line-height:20px;">数据分析</span><svg class="ic" style="left:166.40px;top:249.38px;width:12px;height:12px;color:#666;" viewBox="0 0 12 12"><path fill="none" stroke="currentColor" stroke-width="1.500" d="M1.500 3.700L6 8.200l4.500-4.500"/></svg><div class="it" style="left:0.00px;top:274.48px;width:182.29px;height:40.10px;"></div><div style="left:0.00px;top:273.98px;width:182.29px;height:1.00px;background:#e5e5e5;"></div><svg class="ic" style="left:10.94px;top:285.29px;width:21.49px;height:17.50px;color:#585858;" viewBox="0 0 18 16" preserveAspectRatio="none"><path fill="none" stroke="currentColor" stroke-width="1.300" d="M1 1.500v12.800h16.500"/><g fill="currentColor"><rect x="3.500" y="9" width="2.300" height="4"/><rect x="7" y="5" width="2.300" height="8"/><rect x="10.500" y="7" width="2.300" height="6"/><rect x="14" y="3" width="2.300" height="10"/></g></svg><span class="t lb" style="left:43.84px;top:284.36px;line-height:20px;">设备故障分析</span><svg class="ic" style="left:166.40px;top:289.49px;width:12px;height:12px;color:#666;" viewBox="0 0 12 12"><path fill="none" stroke="currentColor" stroke-width="1.500" d="M1.500 3.700L6 8.200l4.500-4.500"/></svg><div class="it act" style="left:0.00px;top:314.58px;width:182.29px;height:40.10px;"></div><div style="left:0.00px;top:314.08px;width:182.29px;height:1.00px;background:#e5e5e5;"></div><svg class="ic" style="left:16.09px;top:326.11px;width:11.75px;height:15.47px;color:#2b7dbc;" viewBox="0 0 12 16" preserveAspectRatio="none"><path fill="currentColor" d="M1 7.500h10c.4 0 .7.300.7.700v6c0 .4-.3.700-.7.700H1c-.4 0-.7-.3-.7-.7v-6c0-.4.300-.7.700-.7z"/><path fill="none" stroke="currentColor" stroke-width="1.900" d="M2.700 8V5.300a3.300 3.300 0 0 1 6.600 0V8"/></svg><span class="t lb act" style="left:43.84px;top:324.46px;line-height:20px;">备件物资</span><svg class="ic" style="left:166.40px;top:329.59px;width:12px;height:12px;color:#2b7dbc;" viewBox="0 0 12 12"><path fill="none" stroke="currentColor" stroke-width="1.500" d="M1.500 3.700L6 8.200l4.500-4.500"/></svg><div class="sit" style="left:0.00px;top:354.69px;width:182.29px;height:36.46px;"></div><div style="left:0.00px;top:354.19px;width:182.29px;height:1.00px;background:#ececec;"></div><span class="t slb" style="left:37.94px;top:363.35px;line-height:20px;">备件物资仓库管理</span><div class="sit" style="left:0.00px;top:391.15px;width:182.29px;height:36.46px;"></div><div style="left:0.00px;top:390.65px;width:182.29px;height:1.00px;background:#ececec;"></div><span class="t slb" style="left:37.94px;top:399.81px;line-height:20px;">分区/货架管理</span><div class="sit" style="left:0.00px;top:427.60px;width:182.29px;height:36.46px;"></div><div style="left:0.00px;top:427.10px;width:182.29px;height:1.00px;background:#ececec;"></div><span class="t slb" style="left:37.94px;top:436.27px;line-height:20px;">库位管理</span><div class="sit" style="left:0.00px;top:464.06px;width:182.29px;height:36.46px;"></div><div style="left:0.00px;top:463.56px;width:182.29px;height:1.00px;background:#ececec;"></div><svg class="ic" style="left:15.60px;top:477.64px;width:7px;height:10px;color:#c86139;" viewBox="0 0 8 12"><path fill="currentColor" d="M1.500 1.500L6.500 6l-5 4.500z"/></svg><span class="t slb sact" style="left:37.94px;top:472.73px;line-height:20px;">库存管理</span><div class="sit" style="left:0.00px;top:500.52px;width:182.29px;height:36.46px;"></div><div style="left:0.00px;top:500.02px;width:182.29px;height:1.00px;background:#ececec;"></div><span class="t slb" style="left:37.94px;top:509.18px;line-height:20px;">交易管理</span><div class="sit" style="left:0.00px;top:536.98px;width:182.29px;height:36.46px;"></div><div style="left:0.00px;top:536.48px;width:182.29px;height:1.00px;background:#ececec;"></div><span class="t slb" style="left:37.94px;top:545.64px;line-height:20px;">备件物资库存报表</span><svg class="ic" style="left:166.40px;top:550.08px;width:12px;height:12px;color:#666;" viewBox="0 0 12 12"><path fill="none" stroke="currentColor" stroke-width="1.500" d="M1.500 3.700L6 8.200l4.500-4.500"/></svg><div style="left:0.00px;top:572.94px;width:182.29px;height:1.00px;background:#e5e5e5;"></div><div class="strip" style="left:181.42px;top:-1.74px;width:9.03px;height:576.39px;"></div></div></div></body></html>
